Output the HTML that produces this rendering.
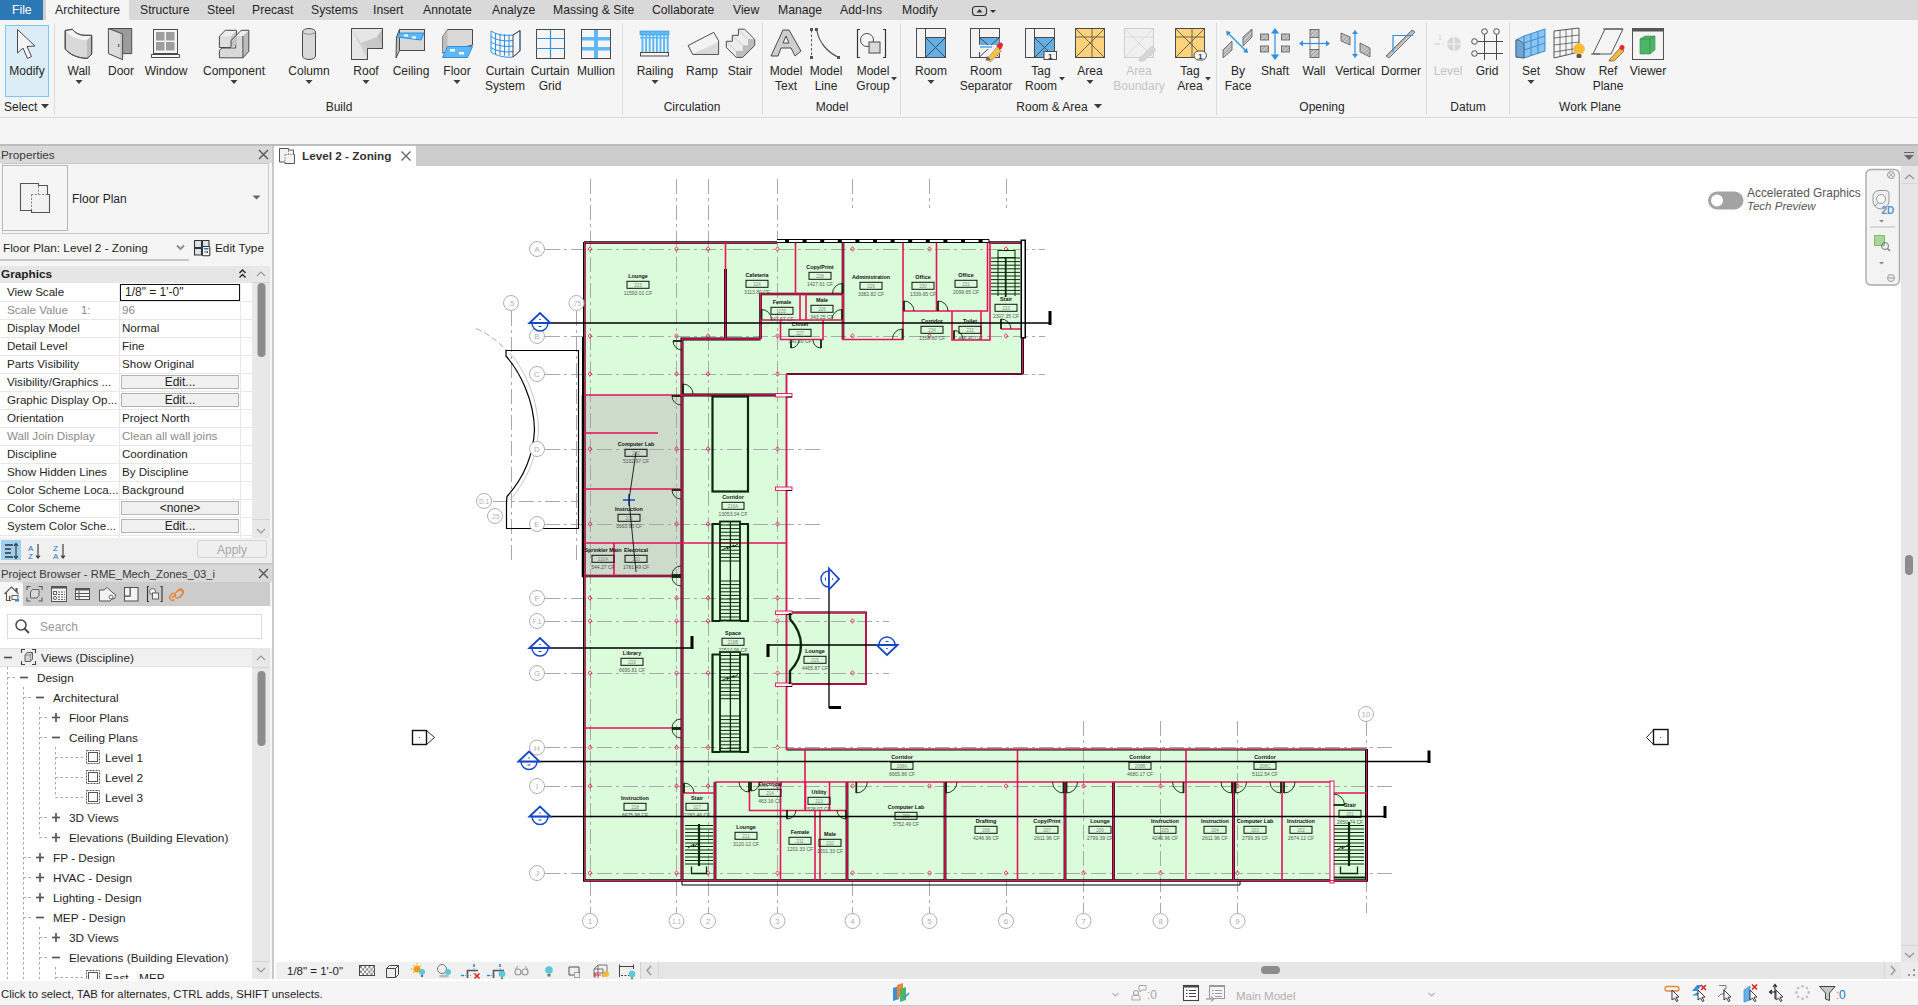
<!DOCTYPE html>
<html><head><meta charset="utf-8"><title>Revit</title><style>*{margin:0;padding:0;box-sizing:border-box}
html,body{width:1918px;height:1006px;overflow:hidden;background:#f5f5f5;font-family:"Liberation Sans",sans-serif;font-size:12px;color:#1e1e1e}
.a{position:absolute}
.t{position:absolute;white-space:nowrap;line-height:14px}
.tab{position:absolute;top:0;height:20px;line-height:20px;font-size:12.2px;color:#262626;white-space:nowrap}
.lbl{position:absolute;text-align:center;font-size:12px;line-height:15px;color:#262626;white-space:nowrap;transform:translateX(-50%)}
.plbl{position:absolute;top:100px;font-size:12px;line-height:15px;color:#262626;white-space:nowrap;transform:translateX(-50%)}
</style></head><body>
<div class="a" style="left:0;top:0;width:1918px;height:20px;background:#d9d9d9"></div>
<div class="a" style="left:0;top:0;width:43px;height:20px;background:#2b78b4"></div>
<div class="a" style="left:43px;top:0;width:3px;height:20px;background:#cfcfcf"></div>
<div class="a" style="left:46px;top:0;width:83px;height:20px;background:#f5f5f5"></div>
<div class="tab" style="left:12px;color:#fff">File</div>
<div class="tab" style="left:55px;">Architecture</div>
<div class="tab" style="left:140px;">Structure</div>
<div class="tab" style="left:207px;">Steel</div>
<div class="tab" style="left:252px;">Precast</div>
<div class="tab" style="left:311px;">Systems</div>
<div class="tab" style="left:373px;">Insert</div>
<div class="tab" style="left:423px;">Annotate</div>
<div class="tab" style="left:492px;">Analyze</div>
<div class="tab" style="left:553px;">Massing &amp; Site</div>
<div class="tab" style="left:652px;">Collaborate</div>
<div class="tab" style="left:733px;">View</div>
<div class="tab" style="left:778px;">Manage</div>
<div class="tab" style="left:840px;">Add-Ins</div>
<div class="tab" style="left:902px;">Modify</div>
<svg class="a" style="left:970px;top:4px" width="30" height="14"><rect x="2.5" y="2.5" width="14" height="9" rx="3" fill="none" stroke="#333" stroke-width="1.1"/><path d="M6.5 8.5 L9.5 5 L12.5 8.5 Z" fill="#333"/><path d="M20 6 h6 l-3 3 z" fill="#333"/></svg>
<div class="a" style="left:0;top:117px;width:1918px;height:1px;background:#dadada"></div>
<svg class="a" style="left:0;top:0" width="1918" height="118" viewBox="0 0 1918 118">
<defs><pattern id="hatch" width="3" height="3" patternUnits="userSpaceOnUse" patternTransform="rotate(45)"><rect width="3" height="3" fill="#c8c8c8"/><path d="M0 0 V3" stroke="#7a7a7a" stroke-width="1"/></pattern></defs>
<rect x="5.5" y="25.5" width="43" height="71" fill="#dcedf8" stroke="#7cc7ee"/>
<path d="M17.5 29.5 L17.5 53 L23 48 L27.5 58.5 L31.5 56.5 L27 46.5 L35 46 Z" fill="#f5f5f5" stroke="#4a4a4a" stroke-width="1"/>
<path d="M65.2 30.5 C68 30 70 30 72.3 29.2 C75 33 79 35 84 35.3 L91.7 35.3 L91.7 54 C90 56 88.5 57.5 87 58.4 C78 58 70 55 65.2 49 Z" fill="#d9d9d9" stroke="#4a4a4a" stroke-width="1"/>
<path d="M65.6 31 C67 30.6 70 30.4 72.3 29.7 C75 33.5 79 35.5 84 35.8 L91.2 35.8 L87 40.3 C78 40 70 37 65.6 31 Z" fill="#f3f3f3"/>
<path d="M87 40.3 L91.2 35.8 V54 C90 56 88.5 57.5 87 58 Z" fill="#bdbdbd"/>
<path d="M65.2 30.5 C68 30 70 30 72.3 29.2 C75 33 79 35 84 35.3 L91.7 35.3 L91.7 54 C90 56 88.5 57.5 87 58.4 C78 58 70 55 65.2 49 Z" fill="none" stroke="#4a4a4a" stroke-width="1"/>
<path d="M108.4 28.5 H131.7 V53.6 H122.6 V34 Z" fill="#9b9b9b"/>
<path d="M108.9 28.8 L122.3 34.2 V59.3 L108.9 53.4 Z" fill="#dcdcdc"/><path d="M120 33.5 L122.3 34.2 V59.3 L120 58.3 Z" fill="#c8c8c8"/>
<path d="M108.4 28.5 H131.7 V53.6 H122.6 V59.7 L108.4 53.6 Z M108.4 28.5 L122.6 34 V53.6" fill="none" stroke="#4a4a4a" stroke-width="1"/>
<rect x="118.2" y="44" width="1" height="3" fill="#444"/>
<rect x="153.5" y="29.5" width="24" height="24" fill="#f5f5f5" stroke="#4a4a4a" stroke-width="1"/>
<rect x="156" y="32" width="8.5" height="8.5" fill="#9e9e9e"/><rect x="166" y="32" width="8.5" height="8.5" fill="#9e9e9e"/>
<rect x="156" y="42" width="8.5" height="8.5" fill="#9e9e9e"/><rect x="166" y="42" width="8.5" height="8.5" fill="#9e9e9e"/>
<path d="M151.5 54.5 L179.5 54.5 L179.5 57.5 L151.5 57.5 Z" fill="#f5f5f5" stroke="#4a4a4a" stroke-width="1"/>
<path d="M219.4 50.3 L222 48 H235.7 V35.9 L241.3 30.3 H248.8 V51.5 L242.9 57.8 H219.4 Z" fill="#d9d9d9"/>
<path d="M242.9 36 L248.8 30.3 V51.5 L242.9 57.8 Z" fill="#bdbdbd"/><path d="M235.7 35.9 L241.3 30.3 H248.8 L242.9 36 Z" fill="#eeeeee"/>
<path d="M219.4 50.3 L222 48 H235.7 V35.9 L241.3 30.3 H248.8 V51.5 L242.9 57.8 H219.4 Z M242.9 36 V57.8" fill="none" stroke="#4a4a4a" stroke-width="1"/>
<path d="M219.4 36.2 L225.3 30.3 H236.6 V35 L231 40.5 V47.5 H219.4 Z" fill="#dedede"/><path d="M231 36.2 L236.6 30.8 V44 L231 49 Z" fill="#c4c4c4"/><path d="M219.9 36.2 L225.3 30.8 H236.3 L231 36.2 Z" fill="#eeeeee"/>
<path d="M219.4 36.2 L225.3 30.3 H236.6 V35 L231 40.5 V47.5 H219.4 Z" fill="none" stroke="#4a4a4a" stroke-width="1"/>
<rect x="302.5" y="28.5" width="13" height="31" rx="6.5" ry="3.5" fill="#d9d9d9" stroke="#4a4a4a" stroke-width="1"/>
<path d="M302.5 32 C304 35 314 35 315.5 32" fill="none" stroke="#8a8a8a"/>
<path d="M351.5 28.5 L382.5 28.5 L382.5 48.5 L367.5 48.5 L367.5 59.5 L351.5 59.5 Z" fill="#e6e6e6" stroke="#4a4a4a" stroke-width="1"/>
<path d="M351.5 28.5 L361 43 L367.5 48.5 L367.5 59.5 Z" fill="#d0d0d0"/><path d="M382.5 28.5 L377 37 L382.5 48.5 Z" fill="#bdbdbd"/><path d="M361 43 L377 37 L382.5 48.5 L367.5 48.5 Z" fill="#c8c8c8"/>
<path d="M351.5 28.5 L382.5 28.5 L382.5 48.5 L367.5 48.5 L367.5 59.5 L351.5 59.5 Z" fill="none" stroke="#4a4a4a" stroke-width="1"/>
<rect x="399.5" y="29.5" width="25" height="21" fill="#d9d9d9" stroke="#4a4a4a" stroke-width="1"/>
<path d="M396.5 37 L399.5 29.5 L399.5 50.5 L396 58 Z" fill="#bdbdbd" stroke="#4a4a4a" stroke-width="1"/>
<path d="M396.5 37 L400 33 L424 33 L421 40 Z" fill="#5eb8f5" stroke="#2d8fe0"/>
<rect x="404" y="34.5" width="4" height="2" fill="#fff"/><rect x="412" y="36.5" width="4" height="2" fill="#fff"/>
<path d="M442.5 37 L447.5 29.5 L472.5 29.5 L472.5 45 L442.5 53 Z" fill="#d9d9d9" stroke="#4a4a4a" stroke-width="1"/>
<path d="M442.5 37 L447.5 29.5 L447.5 47 L442.5 53 Z" fill="#bdbdbd"/>
<path d="M442.5 57.5 L447.5 46.5 L472.5 46.5 L467.5 57.5 Z" fill="#5eb8f5" stroke="#2d8fe0"/>
<rect x="450" y="49" width="5" height="2.5" fill="#fff"/><rect x="459" y="52" width="5" height="2.5" fill="#fff"/>
<path d="M491 31 C497 35 505 36 513 35 L520 30.5 L520 51 L513 57 C505 58 497 56 491 52 Z" fill="#f5f5f5" stroke="#2d8fe0"/>
<path d="M495.5 33.4 L495.5 54.5" stroke="#2d8fe0"/>
<path d="M500.0 33.8 L500.0 55.0" stroke="#2d8fe0"/>
<path d="M504.5 34.2 L504.5 55.5" stroke="#2d8fe0"/>
<path d="M509.0 34.6 L509.0 56.0" stroke="#2d8fe0"/>
<path d="M491 36.5 C497 40.5 505 41.5 513 40.5" fill="none" stroke="#2d8fe0"/>
<path d="M491 42.0 C497 46.0 505 47.0 513 46.0" fill="none" stroke="#2d8fe0"/>
<path d="M491 47.5 C497 51.5 505 52.5 513 51.5" fill="none" stroke="#2d8fe0"/>
<path d="M513 35 L520 30.5 L520 51 L513 57 Z" fill="none" stroke="#4a4a4a" stroke-width="1"/>
<rect x="536.5" y="29.5" width="28" height="29" fill="#f5f5f5" stroke="#4a4a4a" stroke-width="1"/>
<path d="M550.5 29.5 V58.5 M536.5 38.5 H564.5 M536.5 48.5 H564.5" stroke="#2d8fe0" stroke-width="1.2"/>
<rect x="581.5" y="29.5" width="29" height="29" fill="#f5f5f5" stroke="#4a4a4a" stroke-width="1"/>
<rect x="594" y="29.5" width="4" height="29" fill="#5eb8f5"/><rect x="581.5" y="37" width="29" height="3.5" fill="#5eb8f5"/><rect x="581.5" y="47" width="29" height="3.5" fill="#5eb8f5"/>
<rect x="581.5" y="29.5" width="29" height="29" fill="none" stroke="#4a4a4a" stroke-width="1"/>
<rect x="640" y="31" width="29" height="4" fill="#5eb8f5" stroke="#2d8fe0" stroke-width="0.6"/>
<rect x="641.5" y="35" width="2" height="17" fill="#5eb8f5"/>
<rect x="645.1" y="35" width="2" height="17" fill="#5eb8f5"/>
<rect x="648.7" y="35" width="2" height="17" fill="#5eb8f5"/>
<rect x="652.3" y="35" width="2" height="17" fill="#5eb8f5"/>
<rect x="655.9" y="35" width="2" height="17" fill="#5eb8f5"/>
<rect x="659.5" y="35" width="2" height="17" fill="#5eb8f5"/>
<rect x="663.1" y="35" width="2" height="17" fill="#5eb8f5"/>
<rect x="666.7" y="35" width="2" height="17" fill="#5eb8f5"/>
<rect x="640" y="37" width="29" height="1.5" fill="#5eb8f5"/>
<rect x="640.5" y="52.5" width="28" height="3.5" fill="#f5f5f5" stroke="#4a4a4a" stroke-width="1"/>
<path d="M688.1 45.5 L713.8 32.3 L718.6 40.7 V54.4 H692.7 Z" fill="#f3f3f3"/>
<path d="M693.8 53.5 L718 41.9 V53.5 Z" fill="#dadada"/>
<path d="M688.1 45.5 L713.8 32.3 L718.6 40.7 V54.4 H692.7 Z" fill="none" stroke="#4a4a4a" stroke-width="1"/>
<path d="M726.3 41.3 H732.3 V35.3 H738.4 V29.2 H744.6 L754.7 39.4 V45.5 L742.6 57.4 H736.3 L726.3 47.4 Z" fill="#eeeeee"/>
<path d="M735.9 51.1 H742.6 V45.3 H748 V39 H754.2 V45.5 L742.6 57 H736.3 Z" fill="#bdbdbd"/>
<path d="M726.8 41.8 L735.9 51.1 M732.3 35.8 L742.6 45.3 M738.4 29.7 L748 39" stroke="#dadada" stroke-width="1.5"/>
<path d="M726.3 41.3 H732.3 V35.3 H738.4 V29.2 H744.6 L754.7 39.4 V45.5 L742.6 57.4 H736.3 L726.3 47.4 Z" fill="none" stroke="#4a4a4a" stroke-width="1"/>
<path d="M771 56 L783 30 L789 30 L801 51 L795 56 L791 48 L781 48 L778 56 Z" fill="#cfcfcf" stroke="#4a4a4a" stroke-width="1"/>
<path d="M783 43 L786 36 L789 43 Z" fill="#f5f5f5" stroke="#4a4a4a" stroke-width="1"/>
<path d="M811.5 30 V57" stroke="#555" stroke-dasharray="2.5 2"/>
<rect x="810" y="28" width="3" height="3" fill="#555"/><rect x="810" y="56" width="3" height="3" fill="#555"/><rect x="815" y="28" width="3" height="3" fill="#555"/><rect x="837" y="56" width="3" height="3" fill="#555"/>
<path d="M817 31 C819 42 827 52 838 57" fill="none" stroke="#555" stroke-width="1.2"/>
<path d="M860 29.5 H857.5 V57.5 H860 M883 29.5 H885.5 V57.5 H883" fill="none" stroke="#333" stroke-width="1.2"/>
<circle cx="867" cy="40" r="6.5" fill="#f5f5f5" stroke="#4a4a4a" stroke-width="1"/>
<rect x="869" y="42" width="11" height="11" fill="#d9d9d9" stroke="#4a4a4a" stroke-width="1"/>
<rect x="916.5" y="28.5" width="29" height="29" fill="#f3f3f3" stroke="#4a4a4a" stroke-width="1"/>
<rect x="925.5" y="37.5" width="20" height="20" fill="#63b0e6" stroke="#4a4a4a" stroke-width="1"/>
<path d="M925.5 28.5 V44.5 M925.5 53 V57.5 M925.5 37.5 L945.5 57.5 M945.5 37.5 L925.5 57.5" stroke="#4a4a4a" stroke-width="1"/>
<rect x="970.5" y="28.5" width="29" height="29" fill="#f3f3f3" stroke="#4a4a4a" stroke-width="1"/>
<path d="M979.5 37.5 H999.5 V45 H979.5 Z" fill="#63b0e6"/>
<path d="M979.5 28.5 V44.5 M979.5 52 V57.5 M979.5 37.5 H999.5 M979.5 37.5 L988 45 M999.5 37.5 L991 45 M980 56.5 L988 49 M997 55 L998.5 56.5" fill="none" stroke="#4a4a4a" stroke-width="1"/>
<path d="M980 47 H992" stroke="#2d8fe0" stroke-width="1.2"/>
<path d="M986.5 59.5 L997 47 L1001.5 51 L990.5 62 Z" fill="#f4c04a" stroke="#777" stroke-width="0.5"/><path d="M985.5 60.5 L987 56 L991 60 Z" fill="#666"/><path d="M996 46 L999 43 a2.5 2.5 0 0 1 3.5 3.5 L1001 49.5 Z" fill="#e8282a"/>
<rect x="1025.5" y="28.5" width="29" height="29" fill="#f3f3f3" stroke="#4a4a4a" stroke-width="1"/>
<rect x="1034.5" y="37.5" width="20" height="20" fill="#63b0e6" stroke="#4a4a4a" stroke-width="1"/>
<path d="M1034.5 28.5 V44.5 M1034.5 53 V57.5 M1034.5 37.5 L1054.5 57.5 M1054.5 37.5 L1034.5 57.5" stroke="#4a4a4a" stroke-width="1"/>
<rect x="1044" y="51.5" width="12.5" height="8" fill="#f5f5f5" stroke="#4a4a4a" stroke-width="1"/><text x="1050.3" y="58.5" font-size="8" font-weight="bold" text-anchor="middle" fill="#333" font-family="Liberation Sans">1</text>
<rect x="1075.5" y="28.5" width="29" height="29" fill="#fcd27b" stroke="#4a4a4a" stroke-width="1"/>
<path d="M1075.5 28.5 L1104.5 57.5 M1104.5 28.5 L1075.5 57.5 M1075.5 37 H1104.5 M1092 28.5 V57.5" stroke="#4a4a4a" stroke-width="0.8"/>
<rect x="1124.5" y="28.5" width="29" height="29" fill="#f0f0f0" stroke="#cfcfcf"/>
<path d="M1124.5 28.5 L1153.5 57.5 M1153.5 28.5 L1124.5 57.5 M1124.5 37 H1153.5" stroke="#d6d6d6" stroke-width="0.8"/>
<path d="M1140 58 L1152 46 L1156 50 L1144 61 L1139 61 Z" fill="#d6d6d6" stroke="#c8c8c8" stroke-width="0.7"/>
<rect x="1175.5" y="28.5" width="29" height="29" fill="#fcd27b" stroke="#4a4a4a" stroke-width="1"/>
<path d="M1175.5 28.5 L1204.5 57.5 M1204.5 28.5 L1175.5 57.5 M1175.5 37 H1204.5 M1192 28.5 V57.5" stroke="#4a4a4a" stroke-width="0.8"/>
<rect x="1194" y="51" width="12.5" height="9" rx="4.5" fill="#f5f5f5" stroke="#4a4a4a" stroke-width="1"/><text x="1200.3" y="58.5" font-size="7.5" text-anchor="middle" fill="#333" font-weight="bold">1</text>
<path d="M1223 50 L1232 41 L1232 50 L1223 58 Z" fill="url(#hatch)" stroke="#555" stroke-width="0.8"/>
<path d="M1243 37 L1252 29 L1252 37 L1243 46 Z" fill="url(#hatch)" stroke="#555" stroke-width="0.8"/>
<path d="M1228 33 L1246 51" stroke="#2d8fe0" stroke-width="1.2"/><path d="M1226 31 L1231 32 L1227 36 Z M1248 53 L1243 52 L1247 48 Z" fill="#2d8fe0"/>
<rect x="1260.5" y="34.0" width="8" height="6" fill="url(#hatch)" stroke="#555" stroke-width="0.8"/>
<rect x="1281.5" y="34.0" width="8" height="6" fill="url(#hatch)" stroke="#555" stroke-width="0.8"/>
<rect x="1260.5" y="46.0" width="8" height="6" fill="url(#hatch)" stroke="#555" stroke-width="0.8"/>
<rect x="1281.5" y="46.0" width="8" height="6" fill="url(#hatch)" stroke="#555" stroke-width="0.8"/>
<path d="M1275 31 V57 M1272 33 L1275 29 L1278 33 Z M1272 55 L1275 59 L1278 55 Z" stroke="#2d8fe0" fill="#2d8fe0" stroke-width="1.2"/>
<rect x="1310" y="29.5" width="9" height="8" fill="url(#hatch)" stroke="#555" stroke-width="0.8"/><rect x="1310" y="49.5" width="9" height="8" fill="url(#hatch)" stroke="#555" stroke-width="0.8"/>
<path d="M1310 37.5 V49.5 M1319 37.5 V49.5" stroke="#555" stroke-width="0.8"/>
<path d="M1301 43.5 H1328" stroke="#2d8fe0" stroke-width="1.2"/><path d="M1303 40.5 L1299 43.5 L1303 46.5 Z M1326 40.5 L1330 43.5 L1326 46.5 Z" fill="#2d8fe0"/>
<path d="M1341 33 L1350 37 L1350 45 L1341 41 Z" fill="url(#hatch)" stroke="#555" stroke-width="0.8"/><path d="M1360 43 L1370 48 L1370 57 L1360 52 Z" fill="url(#hatch)" stroke="#555" stroke-width="0.8"/>
<path d="M1355 32 V56" stroke="#2d8fe0" stroke-width="1.2"/><path d="M1352 34 L1355 30 L1358 34 Z M1352 54 L1355 58 L1358 54 Z" fill="#2d8fe0"/>
<path d="M1386 56 L1412 30 L1415 32 L1389 58 Z" fill="url(#hatch)" stroke="#555" stroke-width="0.8"/>
<path d="M1393 52 V35.5 H1413" fill="none" stroke="#2d8fe0" stroke-width="1.2"/>
<path d="M1434 44 H1440 M1442 44 H1444" stroke="#cfcfcf"/><text x="1438" y="40" font-size="7" fill="#cfcfcf">1</text>
<circle cx="1454" cy="44" r="7" fill="#d6d6d6"/><path d="M1447 44 H1461 M1454 37 V51" stroke="#f5f5f5" stroke-width="1.2"/>
<circle cx="1484.5" cy="31.5" r="2.8" fill="none" stroke="#4a4a4a" stroke-width="1"/><circle cx="1496.5" cy="31.5" r="2.8" fill="none" stroke="#4a4a4a" stroke-width="1"/>
<circle cx="1474.5" cy="41.5" r="2.8" fill="none" stroke="#4a4a4a" stroke-width="1"/><circle cx="1474.5" cy="53.5" r="2.8" fill="none" stroke="#4a4a4a" stroke-width="1"/>
<path d="M1484.5 34.5 V60 M1496.5 34.5 V60 M1477.5 41.5 H1503 M1477.5 53.5 H1503" stroke="#4a4a4a" stroke-width="1"/>
<path d="M1516 40 L1524 36 L1545 29 L1545 51 L1524 58 L1516 57 Z" fill="#8fc3ea" stroke="#2d8fe0"/>
<path d="M1524 36 L1524 58 M1531 34 L1531 56 M1538 31.5 L1538 53.5 M1524 43 L1545 36 M1524 50 L1545 43" stroke="#2d8fe0"/>
<path d="M1516 40 L1516 57 L1524 58 L1524 44 L1519 40 Z" fill="#6aa7d8" stroke="#555" stroke-width="0.8"/>
<path d="M1554 31 L1579 28 L1579 52 L1554 58 Z" fill="#f5f5f5" stroke="#555"/>
<path d="M1560 30.3 V56.6 M1566 29.6 V55.2 M1572 28.9 V53.8 M1554 38 L1579 35 M1554 45 L1579 42 M1554 52 L1579 48" stroke="#555" stroke-width="0.8"/>
<circle cx="1579" cy="49" r="5.8" fill="#f9b93a"/><rect x="1576.5" y="54" width="5" height="4" rx="1.5" fill="#555"/>
<path d="M1593 54 L1605 29 L1623 29 L1611 54 Z" fill="none" stroke="#555"/>
<path d="M1591 54 H1600 M1603 29 H1623" stroke="#555"/>
<path d="M1610 59 L1620 48 L1624 51 L1614 61 L1609 61 Z" fill="#f4b73f" stroke="#555" stroke-width="0.7"/><circle cx="1622" cy="47.5" r="2.5" fill="#e23"/>
<rect x="1632.5" y="28.5" width="31" height="31" fill="#f5f5f5" stroke="#555"/><rect x="1632.5" y="28.5" width="31" height="3" fill="#555"/>
<path d="M1640 39 L1645 36 L1655 36 L1655 50 L1650 54 L1640 54 Z" fill="#4cb567" stroke="#3a8f4f" stroke-width="0.6"/><path d="M1640 39 L1650 39 L1655 36 M1650 39 V54" fill="none" stroke="#2f7f43" stroke-width="0.6"/>
<rect x="54" y="23" width="1" height="92" fill="#dcdcdc"/>
<rect x="622" y="23" width="1" height="92" fill="#dcdcdc"/>
<rect x="762" y="23" width="1" height="92" fill="#dcdcdc"/>
<rect x="900" y="23" width="1" height="92" fill="#dcdcdc"/>
<rect x="1216" y="23" width="1" height="92" fill="#dcdcdc"/>
<rect x="1426" y="23" width="1" height="92" fill="#dcdcdc"/>
<rect x="1509" y="23" width="1" height="92" fill="#dcdcdc"/>
<path d="M75.5 80 h7 l-3.5 4 z" fill="#3c3c3c"/>
<path d="M230.5 80 h7 l-3.5 4 z" fill="#3c3c3c"/>
<path d="M305.5 80 h7 l-3.5 4 z" fill="#3c3c3c"/>
<path d="M362.5 80 h7 l-3.5 4 z" fill="#3c3c3c"/>
<path d="M453.5 80 h7 l-3.5 4 z" fill="#3c3c3c"/>
<path d="M651.5 80 h7 l-3.5 4 z" fill="#3c3c3c"/>
<path d="M927.5 80 h7 l-3.5 4 z" fill="#3c3c3c"/>
<path d="M1086.5 80 h7 l-3.5 4 z" fill="#3c3c3c"/>
<path d="M1527.5 80 h7 l-3.5 4 z" fill="#3c3c3c"/>
<path d="M891.0 77 h6 l-3 3.5 z" fill="#3c3c3c"/>
<path d="M1059.0 77 h6 l-3 3.5 z" fill="#3c3c3c"/>
<path d="M1205.0 77 h6 l-3 3.5 z" fill="#3c3c3c"/>
<path d="M41 104 h8 l-4 4.5 z" fill="#3c3c3c"/>
<path d="M1094 104 h8 l-4 4.5 z" fill="#3c3c3c"/>
</svg>
<div class="lbl" style="left:27px;top:63.8px;color:#262626">Modify</div>
<div class="lbl" style="left:79px;top:63.8px;color:#262626">Wall</div>
<div class="lbl" style="left:121px;top:63.8px;color:#262626">Door</div>
<div class="lbl" style="left:166px;top:63.8px;color:#262626">Window</div>
<div class="lbl" style="left:234px;top:63.8px;color:#262626">Component</div>
<div class="lbl" style="left:309px;top:63.8px;color:#262626">Column</div>
<div class="lbl" style="left:366px;top:63.8px;color:#262626">Roof</div>
<div class="lbl" style="left:411px;top:63.8px;color:#262626">Ceiling</div>
<div class="lbl" style="left:457px;top:63.8px;color:#262626">Floor</div>
<div class="lbl" style="left:505px;top:63.8px;color:#262626">Curtain</div>
<div class="lbl" style="left:505px;top:78.8px;color:#262626">System</div>
<div class="lbl" style="left:550px;top:63.8px;color:#262626">Curtain</div>
<div class="lbl" style="left:550px;top:78.8px;color:#262626">Grid</div>
<div class="lbl" style="left:596px;top:63.8px;color:#262626">Mullion</div>
<div class="lbl" style="left:655px;top:63.8px;color:#262626">Railing</div>
<div class="lbl" style="left:702px;top:63.8px;color:#262626">Ramp</div>
<div class="lbl" style="left:740px;top:63.8px;color:#262626">Stair</div>
<div class="lbl" style="left:786px;top:63.8px;color:#262626">Model</div>
<div class="lbl" style="left:786px;top:78.8px;color:#262626">Text</div>
<div class="lbl" style="left:826px;top:63.8px;color:#262626">Model</div>
<div class="lbl" style="left:826px;top:78.8px;color:#262626">Line</div>
<div class="lbl" style="left:873px;top:63.8px;color:#262626">Model</div>
<div class="lbl" style="left:873px;top:78.8px;color:#262626">Group</div>
<div class="lbl" style="left:931px;top:63.8px;color:#262626">Room</div>
<div class="lbl" style="left:986px;top:63.8px;color:#262626">Room</div>
<div class="lbl" style="left:986px;top:78.8px;color:#262626">Separator</div>
<div class="lbl" style="left:1041px;top:63.8px;color:#262626">Tag</div>
<div class="lbl" style="left:1041px;top:78.8px;color:#262626">Room</div>
<div class="lbl" style="left:1090px;top:63.8px;color:#262626">Area</div>
<div class="lbl" style="left:1139px;top:63.8px;color:#c4c4c4">Area</div>
<div class="lbl" style="left:1139px;top:78.8px;color:#c4c4c4">Boundary</div>
<div class="lbl" style="left:1190px;top:63.8px;color:#262626">Tag</div>
<div class="lbl" style="left:1190px;top:78.8px;color:#262626">Area</div>
<div class="lbl" style="left:1238px;top:63.8px;color:#262626">By</div>
<div class="lbl" style="left:1238px;top:78.8px;color:#262626">Face</div>
<div class="lbl" style="left:1275px;top:63.8px;color:#262626">Shaft</div>
<div class="lbl" style="left:1314px;top:63.8px;color:#262626">Wall</div>
<div class="lbl" style="left:1355px;top:63.8px;color:#262626">Vertical</div>
<div class="lbl" style="left:1401px;top:63.8px;color:#262626">Dormer</div>
<div class="lbl" style="left:1448px;top:63.8px;color:#c4c4c4">Level</div>
<div class="lbl" style="left:1487px;top:63.8px;color:#262626">Grid</div>
<div class="lbl" style="left:1531px;top:63.8px;color:#262626">Set</div>
<div class="lbl" style="left:1570px;top:63.8px;color:#262626">Show</div>
<div class="lbl" style="left:1608px;top:63.8px;color:#262626">Ref</div>
<div class="lbl" style="left:1608px;top:78.8px;color:#262626">Plane</div>
<div class="lbl" style="left:1648px;top:63.8px;color:#262626">Viewer</div>
<div class="t" style="left:4px;top:100px;line-height:15px">Select</div>
<div class="plbl" style="left:339px">Build</div>
<div class="plbl" style="left:692px">Circulation</div>
<div class="plbl" style="left:832px">Model</div>
<div class="plbl" style="left:1052px">Room &amp; Area</div>
<div class="plbl" style="left:1322px">Opening</div>
<div class="plbl" style="left:1468px">Datum</div>
<div class="plbl" style="left:1590px">Work Plane</div>
<div class="a" style="left:0;top:144px;width:1918px;height:2px;background:#bdbdbd"></div>
<div class="a" style="left:274px;top:146px;width:1644px;height:20px;background:#cccccc"></div>
<div class="a" style="left:274px;top:146px;width:142px;height:20px;background:#ffffff"></div>
<svg class="a" style="left:276px;top:146px" width="22" height="20"><path d="M3.5 2.5 H12.5 V4 H17.5 V8.5 H18.5 V17.5 H9 V16 H3.5 Z" fill="#f2f2f2" stroke="#555" stroke-width="1"/><path d="M12.5 4.5 V8.5 M9 8.5 V15.5 M9 8.5 H17.5" stroke="#777" stroke-width="0.8" stroke-dasharray="1.5 1" fill="none"/></svg>
<div class="t" style="left:302px;top:149px;font-weight:bold;font-size:11.75px;color:#333">Level 2 - Zoning</div>
<svg class="a" style="left:400px;top:150px" width="12" height="12"><path d="M1.5 1.5 L10.5 10.5 M10.5 1.5 L1.5 10.5" stroke="#666" stroke-width="1.4"/></svg>
<svg class="a" style="left:1902px;top:150px" width="14" height="12"><path d="M2 2.5 H12" stroke="#666"/><path d="M2 5 H12 L7 10 Z" fill="#666"/></svg>
<div class="a" style="left:276px;top:166px;width:1625px;height:796px;background:#ffffff"></div>
<div class="a" style="left:274px;top:166px;width:2px;height:815px;background:#ffffff"></div>
<svg class="a" style="left:276px;top:166px" width="1625" height="796" viewBox="276 166 1625 796">
<path d="M584 242 H1022 V374 H786 V749 H1366 V881 H584 Z" fill="#dafcda"/>
<rect x="786" y="612" width="80" height="72" fill="#dafcda"/>
<rect x="585" y="395" width="96" height="181" fill="#cddbca"/>
<g stroke="#a8a8a8" stroke-width="1" fill="none" stroke-dasharray="15 4 3 4"><path d="M590.5 179.0 L590.5 913.0"/><path d="M676.5 179.0 L676.5 913.0"/><path d="M708.5 179.0 L708.5 913.0"/><path d="M777.5 179.0 L777.5 913.0"/><path d="M852.5 179.0 L852.5 208.0"/><path d="M852.5 881.0 L852.5 913.0"/><path d="M929.5 179.0 L929.5 208.0"/><path d="M929.5 881.0 L929.5 913.0"/><path d="M1006.5 179.0 L1006.5 208.0"/><path d="M1006.5 881.0 L1006.5 913.0"/><path d="M1083.5 721.0 L1083.5 913.0"/><path d="M1160.5 721.0 L1160.5 913.0"/><path d="M1237.5 721.0 L1237.5 913.0"/><path d="M1366.5 721.0 L1366.5 913.0"/><path d="M511.5 311.0 L511.5 560.0"/><path d="M576.5 311.0 L576.5 560.0"/><path d="M545.0 249.5 L1045.0 249.5"/><path d="M545.0 336.5 L1045.0 336.5"/><path d="M545.0 374.5 L1045.0 374.5"/><path d="M545.0 449.5 L821.0 449.5"/><path d="M545.0 524.5 L821.0 524.5"/><path d="M545.0 598.5 L821.0 598.5"/><path d="M545.0 621.5 L889.0 621.5"/><path d="M545.0 673.5 L889.0 673.5"/><path d="M545.0 747.5 L1394.0 747.5"/><path d="M545.0 786.5 L1394.0 786.5"/><path d="M545.0 873.5 L1394.0 873.5"/><path d="M493.0 501.5 L578.0 501.5"/></g>
<g fill="none" stroke="#e8115b" stroke-width="0.8"><path d="M590.0 246.7 l1.9 2.3 l-1.9 2.3 l-1.9 -2.3 z"/><path d="M676.5 246.7 l1.9 2.3 l-1.9 2.3 l-1.9 -2.3 z"/><path d="M708.0 246.7 l1.9 2.3 l-1.9 2.3 l-1.9 -2.3 z"/><path d="M777.5 246.7 l1.9 2.3 l-1.9 2.3 l-1.9 -2.3 z"/><path d="M590.0 333.7 l1.9 2.3 l-1.9 2.3 l-1.9 -2.3 z"/><path d="M676.5 333.7 l1.9 2.3 l-1.9 2.3 l-1.9 -2.3 z"/><path d="M708.0 333.7 l1.9 2.3 l-1.9 2.3 l-1.9 -2.3 z"/><path d="M777.5 333.7 l1.9 2.3 l-1.9 2.3 l-1.9 -2.3 z"/><path d="M590.0 371.7 l1.9 2.3 l-1.9 2.3 l-1.9 -2.3 z"/><path d="M676.5 371.7 l1.9 2.3 l-1.9 2.3 l-1.9 -2.3 z"/><path d="M708.0 371.7 l1.9 2.3 l-1.9 2.3 l-1.9 -2.3 z"/><path d="M777.5 371.7 l1.9 2.3 l-1.9 2.3 l-1.9 -2.3 z"/><path d="M590.0 446.7 l1.9 2.3 l-1.9 2.3 l-1.9 -2.3 z"/><path d="M676.5 446.7 l1.9 2.3 l-1.9 2.3 l-1.9 -2.3 z"/><path d="M708.0 446.7 l1.9 2.3 l-1.9 2.3 l-1.9 -2.3 z"/><path d="M777.5 446.7 l1.9 2.3 l-1.9 2.3 l-1.9 -2.3 z"/><path d="M590.0 521.7 l1.9 2.3 l-1.9 2.3 l-1.9 -2.3 z"/><path d="M676.5 521.7 l1.9 2.3 l-1.9 2.3 l-1.9 -2.3 z"/><path d="M708.0 521.7 l1.9 2.3 l-1.9 2.3 l-1.9 -2.3 z"/><path d="M777.5 521.7 l1.9 2.3 l-1.9 2.3 l-1.9 -2.3 z"/><path d="M590.0 595.7 l1.9 2.3 l-1.9 2.3 l-1.9 -2.3 z"/><path d="M676.5 595.7 l1.9 2.3 l-1.9 2.3 l-1.9 -2.3 z"/><path d="M708.0 595.7 l1.9 2.3 l-1.9 2.3 l-1.9 -2.3 z"/><path d="M777.5 595.7 l1.9 2.3 l-1.9 2.3 l-1.9 -2.3 z"/><path d="M590.0 618.7 l1.9 2.3 l-1.9 2.3 l-1.9 -2.3 z"/><path d="M676.5 618.7 l1.9 2.3 l-1.9 2.3 l-1.9 -2.3 z"/><path d="M708.0 618.7 l1.9 2.3 l-1.9 2.3 l-1.9 -2.3 z"/><path d="M777.5 618.7 l1.9 2.3 l-1.9 2.3 l-1.9 -2.3 z"/><path d="M590.0 670.7 l1.9 2.3 l-1.9 2.3 l-1.9 -2.3 z"/><path d="M676.5 670.7 l1.9 2.3 l-1.9 2.3 l-1.9 -2.3 z"/><path d="M708.0 670.7 l1.9 2.3 l-1.9 2.3 l-1.9 -2.3 z"/><path d="M777.5 670.7 l1.9 2.3 l-1.9 2.3 l-1.9 -2.3 z"/><path d="M590.0 745.2 l1.9 2.3 l-1.9 2.3 l-1.9 -2.3 z"/><path d="M676.5 745.2 l1.9 2.3 l-1.9 2.3 l-1.9 -2.3 z"/><path d="M708.0 745.2 l1.9 2.3 l-1.9 2.3 l-1.9 -2.3 z"/><path d="M777.5 745.2 l1.9 2.3 l-1.9 2.3 l-1.9 -2.3 z"/><path d="M590.0 783.7 l1.9 2.3 l-1.9 2.3 l-1.9 -2.3 z"/><path d="M676.5 783.7 l1.9 2.3 l-1.9 2.3 l-1.9 -2.3 z"/><path d="M708.0 783.7 l1.9 2.3 l-1.9 2.3 l-1.9 -2.3 z"/><path d="M777.5 783.7 l1.9 2.3 l-1.9 2.3 l-1.9 -2.3 z"/><path d="M590.0 870.7 l1.9 2.3 l-1.9 2.3 l-1.9 -2.3 z"/><path d="M676.5 870.7 l1.9 2.3 l-1.9 2.3 l-1.9 -2.3 z"/><path d="M708.0 870.7 l1.9 2.3 l-1.9 2.3 l-1.9 -2.3 z"/><path d="M777.5 870.7 l1.9 2.3 l-1.9 2.3 l-1.9 -2.3 z"/><path d="M852.5 246.7 l1.9 2.3 l-1.9 2.3 l-1.9 -2.3 z"/><path d="M929.5 246.7 l1.9 2.3 l-1.9 2.3 l-1.9 -2.3 z"/><path d="M1006.0 246.7 l1.9 2.3 l-1.9 2.3 l-1.9 -2.3 z"/><path d="M852.5 333.7 l1.9 2.3 l-1.9 2.3 l-1.9 -2.3 z"/><path d="M929.5 333.7 l1.9 2.3 l-1.9 2.3 l-1.9 -2.3 z"/><path d="M1006.0 333.7 l1.9 2.3 l-1.9 2.3 l-1.9 -2.3 z"/><path d="M852.5 783.7 l1.9 2.3 l-1.9 2.3 l-1.9 -2.3 z"/><path d="M929.5 783.7 l1.9 2.3 l-1.9 2.3 l-1.9 -2.3 z"/><path d="M1006.0 783.7 l1.9 2.3 l-1.9 2.3 l-1.9 -2.3 z"/><path d="M1083.5 783.7 l1.9 2.3 l-1.9 2.3 l-1.9 -2.3 z"/><path d="M1160.5 783.7 l1.9 2.3 l-1.9 2.3 l-1.9 -2.3 z"/><path d="M1237.5 783.7 l1.9 2.3 l-1.9 2.3 l-1.9 -2.3 z"/><path d="M852.5 870.7 l1.9 2.3 l-1.9 2.3 l-1.9 -2.3 z"/><path d="M929.5 870.7 l1.9 2.3 l-1.9 2.3 l-1.9 -2.3 z"/><path d="M1006.0 870.7 l1.9 2.3 l-1.9 2.3 l-1.9 -2.3 z"/><path d="M1083.5 870.7 l1.9 2.3 l-1.9 2.3 l-1.9 -2.3 z"/><path d="M1160.5 870.7 l1.9 2.3 l-1.9 2.3 l-1.9 -2.3 z"/><path d="M1237.5 870.7 l1.9 2.3 l-1.9 2.3 l-1.9 -2.3 z"/><path d="M852.5 618.7 l1.9 2.3 l-1.9 2.3 l-1.9 -2.3 z"/><path d="M852.5 670.7 l1.9 2.3 l-1.9 2.3 l-1.9 -2.3 z"/></g>
<g stroke="#000" fill="none"><path d="M584 242.5 H777 M989 242.5 H1022 M1022.5 338 V374 M1366.5 749.5 V880.5 H584.3 V242" stroke-width="2.6"/><path d="M1022.5 374 H786.5 M786.5 749.5 H1366.5" stroke-width="1.8"/><path d="M786.5 374 V749.5" stroke-width="1.3"/><path d="M725.5 269 V339 H682 V881 M725.5 339 H760.5" stroke-width="3"/><path d="M682 395 H786" stroke-width="3"/><path d="M583 395 V576 H681" stroke-width="2.5"/><path d="M843 243 V339.5 M760.5 339 V294 H843" stroke-width="2.6"/><path d="M786 612.5 H866 V684 H786" stroke-width="1.8"/><path d="M715 782 V881 M847 782 V881 M1065 782 V881 M1113.5 782 V881 M945 782 V881 M1233.5 782 V881" stroke-width="2.8"/><path d="M682 881 V885 H1240 V881" stroke-width="1"/><path d="M1366.5 749 V881" stroke-width="2.5"/><path d="M1022.5 338 V374" stroke-width="2"/></g>
<g stroke="#e8115b" stroke-width="1.6" fill="none"><path d="M725.5 243 V339 H682 M725.5 339 H760.5"/><path d="M760.5 339 V294 H843 V320 H760.5 M780.5 320 V339.5 H823 V320"/><path d="M795.5 243 V294 M843 243 V339.5 H903 V243 M903 311 H987.5 V243 M936.5 243 V311"/><path d="M952 311 V340 H990 V243 M981 311 V340 M1001 329 H1021"/><path d="M800 294 V320 M806 294 V320"/><path d="M585 395 H786 M585 433 H658 M585 489 H681 M585 543 H786 M614 543 V576 M585 576 H681"/><path d="M682 339 V881 M786.5 374 V749"/><path d="M585 728 H681"/><path d="M786 612.5 H866 V684 H786"/><path d="M805 749 V810 M715 782 H847 V881 M715 782 V881 M682 793 H715 M749.5 782 V810.5 H847 M780.5 782 V881"/><path d="M805.5 782 V810 M829.5 782 V810 M815 810 V881 M820 810 V881"/><path d="M847 782 H1331.5 V881 M945 782 V881 M1017.5 749 V881 M1065 782 V881 M1113.5 782 V881 M1186 749 V881 M1233.5 782 V881 M1282 782 V881"/><path d="M1331.5 793 H1366"/></g>
<rect x="1330" y="781" width="4" height="102" fill="#fff" stroke="#e8115b" stroke-width="1"/>
<path d="M584.5 242.5 H777 M989 242.5 H1022 M1022.5 338 V374 H786.5 V749.5 H1366.5 V880.5 H584.5 V242.5" stroke="#e8115b" stroke-width="1" fill="none"/>
<rect x="777" y="239.5" width="212" height="3.5" fill="#fff"/>
<path d="M777 239.5 H989 M777 242.5 H989 M989 239.5 V243" stroke="#000" stroke-width="1" fill="none"/>
<path d="M785.0 241 h4 M802.6 241 h4 M820.2 241 h4 M837.8 241 h4 M855.4 241 h4 M873.0 241 h4 M890.6 241 h4 M908.2 241 h4 M925.8 241 h4 M943.4 241 h4 M961.0 241 h4 M978.6 241 h4 " stroke="#000" stroke-width="2.5"/>
<rect x="1020.5" y="239.5" width="5.5" height="99" fill="#000"/><rect x="1022" y="241" width="2.5" height="96" fill="#fff"/>
<rect x="712.5" y="396.5" width="35.5" height="95" fill="none" stroke="#0a2a0a" stroke-width="2.2"/><path d="M712.5 524.0 V621.0 M748 524.0 V621.0 M711.5 524.0 H720 M740 524.0 H749 M711.5 621.0 H720 M740 621.0 H749" stroke="#0a2a0a" stroke-width="2.2"/><rect x="720" y="521.5" width="20" height="99.0" fill="none" stroke="#0a2a0a" stroke-width="1.8"/><path d="M730.4 522.0 V620.0" stroke="#0a2a0a" stroke-width="1.3"/><path d="M720 525.0 H740 M720 528.6 H740 M720 532.2 H740 M720 535.8 H740 M720 539.4 H740 M720 543.0 H740 M720 546.6 H740 M720 550.2 H740 M720 553.8 H740 M720 557.4 H740 M720 561.0 H740 M720 581.0 H740 M720 584.6 H740 M720 588.2 H740 M720 591.8 H740 M720 595.4 H740 M720 599.0 H740 M720 602.6 H740 M720 606.2 H740 M720 609.8 H740 M720 613.4 H740 M720 617.0 H740 M720 620.6 H740 " stroke="#0a2a0a" stroke-width="1"/><path d="M722 550.0 L728 547.0 L727 549.0 L734 545.0 L733 547.0 L738 544.0" fill="none" stroke="#0a2a0a" stroke-width="0.9"/><path d="M712.5 654.5 V752.0 M748 654.5 V752.0 M711.5 654.5 H720 M740 654.5 H749 M711.5 752.0 H720 M740 752.0 H749" stroke="#0a2a0a" stroke-width="2.2"/><rect x="720" y="652.0" width="20" height="99.5" fill="none" stroke="#0a2a0a" stroke-width="1.8"/><path d="M730.4 652.5 V751.0" stroke="#0a2a0a" stroke-width="1.3"/><path d="M720 655.5 H740 M720 659.1 H740 M720 662.7 H740 M720 666.3 H740 M720 669.9 H740 M720 673.5 H740 M720 677.1 H740 M720 680.7 H740 M720 684.3 H740 M720 687.9 H740 M720 691.5 H740 M720 695.1 H740 M720 698.7 H740 M720 716.0 H740 M720 719.6 H740 M720 723.2 H740 M720 726.8 H740 M720 730.4 H740 M720 734.0 H740 M720 737.6 H740 M720 741.2 H740 M720 744.8 H740 M720 748.4 H740 M720 752.0 H740 " stroke="#0a2a0a" stroke-width="1"/><path d="M722 680.5 L728 677.5 L727 679.5 L734 675.5 L733 677.5 L738 674.5" fill="none" stroke="#0a2a0a" stroke-width="0.9"/><rect x="998" y="250.5" width="17" height="7" fill="none" stroke="#0a2a0a" stroke-width="1"/><path d="M991 258.0 H1020 M991 261.6 H1020 M991 265.2 H1020 M991 268.8 H1020 M991 272.4 H1020 M991 276.0 H1020 M991 279.6 H1020 M991 283.2 H1020 M991 286.8 H1020 M991 290.4 H1020 M991 294.0 H1020 " stroke="#0a2a0a" stroke-width="1"/><path d="M998 257 V296 M1015 257 V296" stroke="#0a2a0a" stroke-width="1"/><path d="M1005.7 258 V297" stroke="#0a2a0a" stroke-width="1.8"/><path d="M685 825.5 H713 M685 829.0 H713 M685 832.5 H713 M685 836.0 H713 M685 839.5 H713 M685 843.0 H713 M685 846.5 H713 M685 850.0 H713 M685 853.5 H713 M685 857.0 H713 M685 860.5 H713 M685 864.0 H713 " stroke="#0a2a0a" stroke-width="1"/><path d="M699 824 V866" stroke="#0a2a0a" stroke-width="2.2"/><path d="M691.5 866.5 V873.5 H706.5 V866.5" fill="none" stroke="#0a2a0a" stroke-width="1.3"/><path d="M688 848 L694 844 L693 847 L700 842" fill="none" stroke="#0a2a0a" stroke-width="0.9"/><path d="M1334 825.5 H1364 M1334 829.0 H1364 M1334 832.5 H1364 M1334 836.0 H1364 M1334 839.5 H1364 M1334 843.0 H1364 M1334 846.5 H1364 M1334 850.0 H1364 M1334 853.5 H1364 M1334 857.0 H1364 M1334 860.5 H1364 M1334 864.0 H1364 " stroke="#0a2a0a" stroke-width="1"/><path d="M1349 822 V866" stroke="#0a2a0a" stroke-width="2.2"/><path d="M1340.5 866.5 V873.5 H1357.5 V866.5" fill="none" stroke="#0a2a0a" stroke-width="1.3"/><path d="M1334 877.5 H1366" stroke="#0a2a0a" stroke-width="2"/><path d="M1337 850 L1343 846 L1342 849 L1349 844" fill="none" stroke="#0a2a0a" stroke-width="0.9"/>
<path d="M682.0 341.0 L673.0 341.0" stroke="#0a2a0a" stroke-width="1.8"/><path d="M673.0 341.0 A9.0 9.0 0 0 0 682.0 350.0" fill="none" stroke="#0a2a0a" stroke-width="0.9"/><path d="M683.0 394.0 L683.0 384.0" stroke="#0a2a0a" stroke-width="1.8"/><path d="M683.0 384.0 A10.0 10.0 0 0 1 693.0 394.0" fill="none" stroke="#0a2a0a" stroke-width="0.9"/><path d="M842.5 293.5 L842.5 283.5" stroke="#0a2a0a" stroke-width="1.8"/><path d="M842.5 283.5 A10.0 10.0 0 0 0 832.5 293.5" fill="none" stroke="#0a2a0a" stroke-width="0.9"/><path d="M902.5 339.0 L902.5 329.0" stroke="#0a2a0a" stroke-width="1.8"/><path d="M902.5 329.0 A10.0 10.0 0 0 0 892.5 339.0" fill="none" stroke="#0a2a0a" stroke-width="0.9"/><path d="M904.0 311.0 L904.0 301.0" stroke="#0a2a0a" stroke-width="1.8"/><path d="M904.0 301.0 A10.0 10.0 0 0 1 914.0 311.0" fill="none" stroke="#0a2a0a" stroke-width="0.9"/><path d="M938.0 311.0 L938.0 301.0" stroke="#0a2a0a" stroke-width="1.8"/><path d="M938.0 301.0 A10.0 10.0 0 0 1 948.0 311.0" fill="none" stroke="#0a2a0a" stroke-width="0.9"/><path d="M761.5 319.5 L761.5 309.5" stroke="#0a2a0a" stroke-width="1.8"/><path d="M761.5 309.5 A10.0 10.0 0 0 1 771.5 319.5" fill="none" stroke="#0a2a0a" stroke-width="0.9"/><path d="M842.0 319.5 L842.0 309.5" stroke="#0a2a0a" stroke-width="1.8"/><path d="M842.0 309.5 A10.0 10.0 0 0 0 832.0 319.5" fill="none" stroke="#0a2a0a" stroke-width="0.9"/><path d="M954.0 339.5 L954.0 330.5" stroke="#0a2a0a" stroke-width="1.8"/><path d="M954.0 330.5 A9.0 9.0 0 0 1 963.0 339.5" fill="none" stroke="#0a2a0a" stroke-width="0.9"/><path d="M1001.0 329.0 L1001.0 319.0" stroke="#0a2a0a" stroke-width="1.8"/><path d="M1001.0 319.0 A10.0 10.0 0 0 1 1011.0 329.0" fill="none" stroke="#0a2a0a" stroke-width="0.9"/><path d="M791.0 340.0 L791.0 348.0" stroke="#0a2a0a" stroke-width="1.8"/><path d="M791.0 348.0 A8.0 8.0 0 0 0 799.0 340.0" fill="none" stroke="#0a2a0a" stroke-width="0.9"/><path d="M821.0 340.0 L821.0 348.0" stroke="#0a2a0a" stroke-width="1.8"/><path d="M821.0 348.0 A8.0 8.0 0 0 1 813.0 340.0" fill="none" stroke="#0a2a0a" stroke-width="0.9"/><path d="M681.0 396.0 L672.0 396.0" stroke="#0a2a0a" stroke-width="1.8"/><path d="M672.0 396.0 A9.0 9.0 0 0 0 681.0 405.0" fill="none" stroke="#0a2a0a" stroke-width="0.9"/><path d="M681.0 490.0 L672.0 490.0" stroke="#0a2a0a" stroke-width="1.8"/><path d="M672.0 490.0 A9.0 9.0 0 0 0 681.0 499.0" fill="none" stroke="#0a2a0a" stroke-width="0.9"/><path d="M681.0 575.0 L672.0 575.0" stroke="#0a2a0a" stroke-width="1.8"/><path d="M672.0 575.0 A9.0 9.0 0 0 1 681.0 566.0" fill="none" stroke="#0a2a0a" stroke-width="0.9"/><path d="M681.0 577.0 L672.0 577.0" stroke="#0a2a0a" stroke-width="1.8"/><path d="M672.0 577.0 A9.0 9.0 0 0 0 681.0 586.0" fill="none" stroke="#0a2a0a" stroke-width="0.9"/><path d="M681.0 728.0 L672.0 728.0" stroke="#0a2a0a" stroke-width="1.8"/><path d="M672.0 728.0 A9.0 9.0 0 0 1 681.0 719.0" fill="none" stroke="#0a2a0a" stroke-width="0.9"/><path d="M681.0 729.0 L672.0 729.0" stroke="#0a2a0a" stroke-width="1.8"/><path d="M672.0 729.0 A9.0 9.0 0 0 0 681.0 738.0" fill="none" stroke="#0a2a0a" stroke-width="0.9"/><path d="M684.0 793.0 L684.0 783.0" stroke="#0a2a0a" stroke-width="1.8"/><path d="M684.0 783.0 A10.0 10.0 0 0 1 694.0 793.0" fill="none" stroke="#0a2a0a" stroke-width="0.9"/><path d="M749.0 782.0 L749.0 792.0" stroke="#0a2a0a" stroke-width="1.8"/><path d="M749.0 792.0 A10.0 10.0 0 0 1 739.0 782.0" fill="none" stroke="#0a2a0a" stroke-width="0.9"/><path d="M751.0 782.0 L751.0 791.0" stroke="#0a2a0a" stroke-width="1.8"/><path d="M751.0 791.0 A9.0 9.0 0 0 0 760.0 782.0" fill="none" stroke="#0a2a0a" stroke-width="0.9"/><path d="M787.0 810.0 L787.0 819.0" stroke="#0a2a0a" stroke-width="1.8"/><path d="M787.0 819.0 A9.0 9.0 0 0 0 796.0 810.0" fill="none" stroke="#0a2a0a" stroke-width="0.9"/><path d="M846.0 810.0 L846.0 819.0" stroke="#0a2a0a" stroke-width="1.8"/><path d="M846.0 819.0 A9.0 9.0 0 0 1 837.0 810.0" fill="none" stroke="#0a2a0a" stroke-width="0.9"/><path d="M856.3 782.0 L856.3 793.0" stroke="#0a2a0a" stroke-width="1.8"/><path d="M856.3 793.0 A11.0 11.0 0 0 0 867.3 782.0" fill="none" stroke="#0a2a0a" stroke-width="0.9"/><path d="M946.0 782.0 L946.0 793.0" stroke="#0a2a0a" stroke-width="1.8"/><path d="M946.0 793.0 A11.0 11.0 0 0 0 957.0 782.0" fill="none" stroke="#0a2a0a" stroke-width="0.9"/><path d="M1063.5 782.0 L1063.5 793.0" stroke="#0a2a0a" stroke-width="1.8"/><path d="M1063.5 793.0 A11.0 11.0 0 0 1 1052.5 782.0" fill="none" stroke="#0a2a0a" stroke-width="0.9"/><path d="M1066.5 782.0 L1066.5 793.0" stroke="#0a2a0a" stroke-width="1.8"/><path d="M1066.5 793.0 A11.0 11.0 0 0 0 1077.5 782.0" fill="none" stroke="#0a2a0a" stroke-width="0.9"/><path d="M1183.5 782.0 L1183.5 793.0" stroke="#0a2a0a" stroke-width="1.8"/><path d="M1183.5 793.0 A11.0 11.0 0 0 1 1172.5 782.0" fill="none" stroke="#0a2a0a" stroke-width="0.9"/><path d="M1232.0 782.0 L1232.0 793.0" stroke="#0a2a0a" stroke-width="1.8"/><path d="M1232.0 793.0 A11.0 11.0 0 0 1 1221.0 782.0" fill="none" stroke="#0a2a0a" stroke-width="0.9"/><path d="M1235.5 782.0 L1235.5 793.0" stroke="#0a2a0a" stroke-width="1.8"/><path d="M1235.5 793.0 A11.0 11.0 0 0 0 1246.5 782.0" fill="none" stroke="#0a2a0a" stroke-width="0.9"/><path d="M1281.0 782.0 L1281.0 793.0" stroke="#0a2a0a" stroke-width="1.8"/><path d="M1281.0 793.0 A11.0 11.0 0 0 1 1270.0 782.0" fill="none" stroke="#0a2a0a" stroke-width="0.9"/><path d="M1284.0 782.0 L1284.0 793.0" stroke="#0a2a0a" stroke-width="1.8"/><path d="M1284.0 793.0 A11.0 11.0 0 0 0 1295.0 782.0" fill="none" stroke="#0a2a0a" stroke-width="0.9"/><path d="M1333.5 805.0 L1344.5 805.0" stroke="#0a2a0a" stroke-width="1.8"/><path d="M1344.5 805.0 A11.0 11.0 0 0 0 1333.5 794.0" fill="none" stroke="#0a2a0a" stroke-width="0.9"/>
<rect x="775.5" y="393.5" width="16.5" height="3.5" fill="#fdf0f4" stroke="#e8115b" stroke-width="0.9"/><rect x="775.5" y="487.0" width="16.5" height="3.5" fill="#fdf0f4" stroke="#e8115b" stroke-width="0.9"/><rect x="775.5" y="611.0" width="16.5" height="3.5" fill="#fdf0f4" stroke="#e8115b" stroke-width="0.9"/><rect x="775.5" y="683.0" width="16.5" height="3.5" fill="#fdf0f4" stroke="#e8115b" stroke-width="0.9"/>
<path d="M786 397.0 H792" stroke="#111" stroke-width="1"/><path d="M786 490.5 H792" stroke="#111" stroke-width="1"/><path d="M786 614.5 H792" stroke="#111" stroke-width="1"/><path d="M786 686.5 H792" stroke="#111" stroke-width="1"/>
<path d="M790 613 V619 C797 627 801 636 801 645 C801 655 797 664 790 671 V684" fill="none" stroke="#0a2a0a" stroke-width="2.4"/>
<path d="M506 350.5 H578.5 V528.5 H506.5 V502 L507 496.5 C520 482 533 460 534.5 430 C534 400 520 372 506 356 Z" fill="none" stroke="#000" stroke-width="1.2"/>
<path d="M510 353 C526 372 538 400 538.5 430 C537 460 524 484 510 500" fill="none" stroke="#b8b8b8" stroke-width="0.8"/>
<path d="M476 328.5 C488 334 498 341 506 350" fill="none" stroke="#999" stroke-width="0.8" stroke-dasharray="6 3"/>
<path d="M582.5 337 V576" stroke="#000" stroke-width="1"/>
<g font-family="Liberation Sans, sans-serif"><text x="638" y="277.7" font-size="5.4" font-weight="bold" text-anchor="middle" fill="#111">Lounge</text><rect x="627.0" y="281.3" width="22" height="7" fill="none" stroke="#111" stroke-width="1"/><text x="638" y="287.0" font-size="4.6" text-anchor="middle" fill="#888">223</text><text x="638" y="294.8" font-size="5" text-anchor="middle" fill="#555">11593.01 CF</text><text x="757" y="276.7" font-size="5.4" font-weight="bold" text-anchor="middle" fill="#111">Cafeteria</text><rect x="746.0" y="280.3" width="22" height="7" fill="none" stroke="#111" stroke-width="1"/><text x="757" y="286.0" font-size="4.6" text-anchor="middle" fill="#888">224</text><text x="757" y="293.8" font-size="5" text-anchor="middle" fill="#555">3113.80 CF</text><text x="820" y="268.7" font-size="5.4" font-weight="bold" text-anchor="middle" fill="#111">Copy/Print</text><rect x="809.0" y="272.3" width="22" height="7" fill="none" stroke="#111" stroke-width="1"/><text x="820" y="278.0" font-size="4.6" text-anchor="middle" fill="#888">228</text><text x="820" y="285.8" font-size="5" text-anchor="middle" fill="#555">1427.61 CF</text><text x="871" y="278.7" font-size="5.4" font-weight="bold" text-anchor="middle" fill="#111">Administration</text><rect x="860.0" y="282.3" width="22" height="7" fill="none" stroke="#111" stroke-width="1"/><text x="871" y="288.0" font-size="4.6" text-anchor="middle" fill="#888">229</text><text x="871" y="295.8" font-size="5" text-anchor="middle" fill="#555">3382.82 CF</text><text x="923" y="278.7" font-size="5.4" font-weight="bold" text-anchor="middle" fill="#111">Office</text><rect x="912.0" y="282.3" width="22" height="7" fill="none" stroke="#111" stroke-width="1"/><text x="923" y="288.0" font-size="4.6" text-anchor="middle" fill="#888">230</text><text x="923" y="295.8" font-size="5" text-anchor="middle" fill="#555">1339.65 CF</text><text x="966" y="276.7" font-size="5.4" font-weight="bold" text-anchor="middle" fill="#111">Office</text><rect x="955.0" y="280.3" width="22" height="7" fill="none" stroke="#111" stroke-width="1"/><text x="966" y="286.0" font-size="4.6" text-anchor="middle" fill="#888">231</text><text x="966" y="293.8" font-size="5" text-anchor="middle" fill="#555">2099.65 CF</text><text x="1006" y="300.7" font-size="5.4" font-weight="bold" text-anchor="middle" fill="#111">Stair</text><rect x="995.0" y="304.3" width="22" height="7" fill="none" stroke="#111" stroke-width="1"/><text x="1006" y="310.0" font-size="4.6" text-anchor="middle" fill="#888">233</text><text x="1006" y="317.8" font-size="5" text-anchor="middle" fill="#555">2307.35 CF</text><text x="782" y="303.7" font-size="5.4" font-weight="bold" text-anchor="middle" fill="#111">Female</text><rect x="771.0" y="307.3" width="22" height="7" fill="none" stroke="#111" stroke-width="1"/><text x="782" y="313.0" font-size="4.6" text-anchor="middle" fill="#888">225</text><text x="782" y="320.8" font-size="5" text-anchor="middle" fill="#555">347.67 CF</text><text x="822" y="301.7" font-size="5.4" font-weight="bold" text-anchor="middle" fill="#111">Male</text><rect x="811.0" y="305.3" width="22" height="7" fill="none" stroke="#111" stroke-width="1"/><text x="822" y="311.0" font-size="4.6" text-anchor="middle" fill="#888">226</text><text x="822" y="318.8" font-size="5" text-anchor="middle" fill="#555">343.25 CF</text><text x="800" y="325.7" font-size="5.4" font-weight="bold" text-anchor="middle" fill="#111">Closet</text><rect x="789.0" y="329.3" width="22" height="7" fill="none" stroke="#111" stroke-width="1"/><text x="800" y="335.0" font-size="4.6" text-anchor="middle" fill="#888">227</text><text x="800" y="342.8" font-size="5" text-anchor="middle" fill="#555">341.20 CF</text><text x="932" y="322.7" font-size="5.4" font-weight="bold" text-anchor="middle" fill="#111">Corridor</text><rect x="921.0" y="326.3" width="22" height="7" fill="none" stroke="#111" stroke-width="1"/><text x="932" y="332.0" font-size="4.6" text-anchor="middle" fill="#888">234</text><text x="932" y="339.8" font-size="5" text-anchor="middle" fill="#555">1358.80 CF</text><text x="970" y="322.7" font-size="5.4" font-weight="bold" text-anchor="middle" fill="#111">Toilet</text><rect x="959.0" y="326.3" width="22" height="7" fill="none" stroke="#111" stroke-width="1"/><text x="970" y="332.0" font-size="4.6" text-anchor="middle" fill="#888">232</text><text x="970" y="339.8" font-size="5" text-anchor="middle" fill="#555">466.40 CF</text><text x="636" y="445.7" font-size="5.4" font-weight="bold" text-anchor="middle" fill="#111">Computer Lab</text><rect x="625.0" y="449.3" width="22" height="7" fill="none" stroke="#111" stroke-width="1"/><text x="636" y="455.0" font-size="4.6" text-anchor="middle" fill="#888">222</text><text x="636" y="462.8" font-size="5" text-anchor="middle" fill="#555">5332.97 CF</text><text x="629" y="510.7" font-size="5.4" font-weight="bold" text-anchor="middle" fill="#111">Instruction</text><rect x="618.0" y="514.3" width="22" height="7" fill="none" stroke="#111" stroke-width="1"/><text x="629" y="520.0" font-size="4.6" text-anchor="middle" fill="#888">221</text><text x="629" y="527.8" font-size="5" text-anchor="middle" fill="#555">3663.96 CF</text><text x="603" y="551.7" font-size="5.4" font-weight="bold" text-anchor="middle" fill="#111">Sprinkler Main</text><rect x="592.0" y="555.3" width="22" height="7" fill="none" stroke="#111" stroke-width="1"/><text x="603" y="561.0" font-size="4.6" text-anchor="middle" fill="#888">220A</text><text x="603" y="568.8" font-size="5" text-anchor="middle" fill="#555">544.27 CF</text><text x="636" y="551.7" font-size="5.4" font-weight="bold" text-anchor="middle" fill="#111">Electrical</text><rect x="625.0" y="555.3" width="22" height="7" fill="none" stroke="#111" stroke-width="1"/><text x="636" y="561.0" font-size="4.6" text-anchor="middle" fill="#888">220</text><text x="636" y="568.8" font-size="5" text-anchor="middle" fill="#555">1781.49 CF</text><text x="733" y="498.7" font-size="5.4" font-weight="bold" text-anchor="middle" fill="#111">Corridor</text><rect x="722.0" y="502.3" width="22" height="7" fill="none" stroke="#111" stroke-width="1"/><text x="733" y="508.0" font-size="4.6" text-anchor="middle" fill="#888">216A</text><text x="733" y="515.8" font-size="5" text-anchor="middle" fill="#555">13053.04 CF</text><text x="733" y="634.7" font-size="5.4" font-weight="bold" text-anchor="middle" fill="#111">Space</text><rect x="722.0" y="638.3" width="22" height="7" fill="none" stroke="#111" stroke-width="1"/><text x="733" y="644.0" font-size="4.6" text-anchor="middle" fill="#888">216B</text><text x="733" y="651.8" font-size="5" text-anchor="middle" fill="#555">22510.96 CF</text><text x="632" y="654.7" font-size="5.4" font-weight="bold" text-anchor="middle" fill="#111">Library</text><rect x="621.0" y="658.3" width="22" height="7" fill="none" stroke="#111" stroke-width="1"/><text x="632" y="664.0" font-size="4.6" text-anchor="middle" fill="#888">219</text><text x="632" y="671.8" font-size="5" text-anchor="middle" fill="#555">6695.81 CF</text><text x="815" y="652.7" font-size="5.4" font-weight="bold" text-anchor="middle" fill="#111">Lounge</text><rect x="804.0" y="656.3" width="22" height="7" fill="none" stroke="#111" stroke-width="1"/><text x="815" y="662.0" font-size="4.6" text-anchor="middle" fill="#888">215</text><text x="815" y="669.8" font-size="5" text-anchor="middle" fill="#555">4465.87 CF</text><text x="635" y="799.7" font-size="5.4" font-weight="bold" text-anchor="middle" fill="#111">Instruction</text><rect x="624.0" y="803.3" width="22" height="7" fill="none" stroke="#111" stroke-width="1"/><text x="635" y="809.0" font-size="4.6" text-anchor="middle" fill="#888">218</text><text x="635" y="816.8" font-size="5" text-anchor="middle" fill="#555">6675.98 CF</text><text x="697" y="799.7" font-size="5.4" font-weight="bold" text-anchor="middle" fill="#111">Stair</text><rect x="686.0" y="803.3" width="22" height="7" fill="none" stroke="#111" stroke-width="1"/><text x="697" y="809.0" font-size="4.6" text-anchor="middle" fill="#888">217</text><text x="697" y="816.8" font-size="5" text-anchor="middle" fill="#555">2283.46 CF</text><text x="746" y="828.7" font-size="5.4" font-weight="bold" text-anchor="middle" fill="#111">Lounge</text><rect x="735.0" y="832.3" width="22" height="7" fill="none" stroke="#111" stroke-width="1"/><text x="746" y="838.0" font-size="4.6" text-anchor="middle" fill="#888">212</text><text x="746" y="845.8" font-size="5" text-anchor="middle" fill="#555">3120.12 CF</text><text x="770" y="785.7" font-size="5.4" font-weight="bold" text-anchor="middle" fill="#111">Electrical</text><rect x="759.0" y="789.3" width="22" height="7" fill="none" stroke="#111" stroke-width="1"/><text x="770" y="795.0" font-size="4.6" text-anchor="middle" fill="#888">214</text><text x="770" y="802.8" font-size="5" text-anchor="middle" fill="#555">463.16 CF</text><text x="819" y="793.7" font-size="5.4" font-weight="bold" text-anchor="middle" fill="#111">Utility</text><rect x="808.0" y="797.3" width="22" height="7" fill="none" stroke="#111" stroke-width="1"/><text x="819" y="803.0" font-size="4.6" text-anchor="middle" fill="#888">213</text><text x="819" y="810.8" font-size="5" text-anchor="middle" fill="#555">528.07 CF</text><text x="800" y="833.7" font-size="5.4" font-weight="bold" text-anchor="middle" fill="#111">Female</text><rect x="789.0" y="837.3" width="22" height="7" fill="none" stroke="#111" stroke-width="1"/><text x="800" y="843.0" font-size="4.6" text-anchor="middle" fill="#888">211</text><text x="800" y="850.8" font-size="5" text-anchor="middle" fill="#555">1201.33 CF</text><text x="830" y="835.7" font-size="5.4" font-weight="bold" text-anchor="middle" fill="#111">Male</text><rect x="819.0" y="839.3" width="22" height="7" fill="none" stroke="#111" stroke-width="1"/><text x="830" y="845.0" font-size="4.6" text-anchor="middle" fill="#888">210</text><text x="830" y="852.8" font-size="5" text-anchor="middle" fill="#555">1201.33 CF</text><text x="906" y="808.7" font-size="5.4" font-weight="bold" text-anchor="middle" fill="#111">Computer Lab</text><rect x="895.0" y="812.3" width="22" height="7" fill="none" stroke="#111" stroke-width="1"/><text x="906" y="818.0" font-size="4.6" text-anchor="middle" fill="#888">209</text><text x="906" y="825.8" font-size="5" text-anchor="middle" fill="#555">5752.49 CF</text><text x="986" y="822.7" font-size="5.4" font-weight="bold" text-anchor="middle" fill="#111">Drafting</text><rect x="975.0" y="826.3" width="22" height="7" fill="none" stroke="#111" stroke-width="1"/><text x="986" y="832.0" font-size="4.6" text-anchor="middle" fill="#888">208</text><text x="986" y="839.8" font-size="5" text-anchor="middle" fill="#555">4246.96 CF</text><text x="1047" y="822.7" font-size="5.4" font-weight="bold" text-anchor="middle" fill="#111">Copy/Print</text><rect x="1036.0" y="826.3" width="22" height="7" fill="none" stroke="#111" stroke-width="1"/><text x="1047" y="832.0" font-size="4.6" text-anchor="middle" fill="#888">207</text><text x="1047" y="839.8" font-size="5" text-anchor="middle" fill="#555">2611.96 CF</text><text x="1100" y="822.7" font-size="5.4" font-weight="bold" text-anchor="middle" fill="#111">Lounge</text><rect x="1089.0" y="826.3" width="22" height="7" fill="none" stroke="#111" stroke-width="1"/><text x="1100" y="832.0" font-size="4.6" text-anchor="middle" fill="#888">206</text><text x="1100" y="839.8" font-size="5" text-anchor="middle" fill="#555">2799.39 CF</text><text x="1165" y="822.7" font-size="5.4" font-weight="bold" text-anchor="middle" fill="#111">Instruction</text><rect x="1154.0" y="826.3" width="22" height="7" fill="none" stroke="#111" stroke-width="1"/><text x="1165" y="832.0" font-size="4.6" text-anchor="middle" fill="#888">205</text><text x="1165" y="839.8" font-size="5" text-anchor="middle" fill="#555">4246.96 CF</text><text x="1215" y="822.7" font-size="5.4" font-weight="bold" text-anchor="middle" fill="#111">Instruction</text><rect x="1204.0" y="826.3" width="22" height="7" fill="none" stroke="#111" stroke-width="1"/><text x="1215" y="832.0" font-size="4.6" text-anchor="middle" fill="#888">204</text><text x="1215" y="839.8" font-size="5" text-anchor="middle" fill="#555">2611.96 CF</text><text x="1255" y="822.7" font-size="5.4" font-weight="bold" text-anchor="middle" fill="#111">Computer Lab</text><rect x="1244.0" y="826.3" width="22" height="7" fill="none" stroke="#111" stroke-width="1"/><text x="1255" y="832.0" font-size="4.6" text-anchor="middle" fill="#888">203</text><text x="1255" y="839.8" font-size="5" text-anchor="middle" fill="#555">2799.39 CF</text><text x="1301" y="822.7" font-size="5.4" font-weight="bold" text-anchor="middle" fill="#111">Instruction</text><rect x="1290.0" y="826.3" width="22" height="7" fill="none" stroke="#111" stroke-width="1"/><text x="1301" y="832.0" font-size="4.6" text-anchor="middle" fill="#888">202</text><text x="1301" y="839.8" font-size="5" text-anchor="middle" fill="#555">2674.12 CF</text><text x="1350" y="806.7" font-size="5.4" font-weight="bold" text-anchor="middle" fill="#111">Stair</text><rect x="1339.0" y="810.3" width="22" height="7" fill="none" stroke="#111" stroke-width="1"/><text x="1350" y="816.0" font-size="4.6" text-anchor="middle" fill="#888">201</text><text x="1350" y="823.8" font-size="5" text-anchor="middle" fill="#555">2650.74 CF</text><text x="902" y="758.7" font-size="5.4" font-weight="bold" text-anchor="middle" fill="#111">Corridor</text><rect x="891.0" y="762.3" width="22" height="7" fill="none" stroke="#111" stroke-width="1"/><text x="902" y="768.0" font-size="4.6" text-anchor="middle" fill="#888">208A</text><text x="902" y="775.8" font-size="5" text-anchor="middle" fill="#555">6665.86 CF</text><text x="1140" y="758.7" font-size="5.4" font-weight="bold" text-anchor="middle" fill="#111">Corridor</text><rect x="1129.0" y="762.3" width="22" height="7" fill="none" stroke="#111" stroke-width="1"/><text x="1140" y="768.0" font-size="4.6" text-anchor="middle" fill="#888">208B</text><text x="1140" y="775.8" font-size="5" text-anchor="middle" fill="#555">4680.17 CF</text><text x="1265" y="758.7" font-size="5.4" font-weight="bold" text-anchor="middle" fill="#111">Corridor</text><rect x="1254.0" y="762.3" width="22" height="7" fill="none" stroke="#111" stroke-width="1"/><text x="1265" y="768.0" font-size="4.6" text-anchor="middle" fill="#888">208C</text><text x="1265" y="775.8" font-size="5" text-anchor="middle" fill="#555">5112.54 CF</text></g>
<path d="M545 249.0 H530" stroke="#b0b0b0"/><circle cx="537.0" cy="249.0" r="7.5" fill="#fff" stroke="#b0b0b0" stroke-width="1"/><text x="537.0" y="252.0" font-size="8.0" text-anchor="middle" fill="#b0b0b0">A</text><path d="M545 336.0 H530" stroke="#b0b0b0"/><circle cx="537.0" cy="336.0" r="7.5" fill="#fff" stroke="#b0b0b0" stroke-width="1"/><text x="537.0" y="339.0" font-size="8.0" text-anchor="middle" fill="#b0b0b0">B</text><path d="M545 374.0 H530" stroke="#b0b0b0"/><circle cx="537.0" cy="374.0" r="7.5" fill="#fff" stroke="#b0b0b0" stroke-width="1"/><text x="537.0" y="377.0" font-size="8.0" text-anchor="middle" fill="#b0b0b0">C</text><path d="M545 449.0 H530" stroke="#b0b0b0"/><circle cx="537.0" cy="449.0" r="7.5" fill="#fff" stroke="#b0b0b0" stroke-width="1"/><text x="537.0" y="452.0" font-size="8.0" text-anchor="middle" fill="#b0b0b0">D</text><path d="M545 524.0 H530" stroke="#b0b0b0"/><circle cx="537.0" cy="524.0" r="7.5" fill="#fff" stroke="#b0b0b0" stroke-width="1"/><text x="537.0" y="527.0" font-size="8.0" text-anchor="middle" fill="#b0b0b0">E</text><path d="M545 598.0 H530" stroke="#b0b0b0"/><circle cx="537.0" cy="598.0" r="7.5" fill="#fff" stroke="#b0b0b0" stroke-width="1"/><text x="537.0" y="601.0" font-size="8.0" text-anchor="middle" fill="#b0b0b0">F</text><path d="M545 621.0 H530" stroke="#b0b0b0"/><circle cx="537.0" cy="621.0" r="7.5" fill="#fff" stroke="#b0b0b0" stroke-width="1"/><text x="537.0" y="624.0" font-size="6.5" text-anchor="middle" fill="#b0b0b0">F.1</text><path d="M545 673.0 H530" stroke="#b0b0b0"/><circle cx="537.0" cy="673.0" r="7.5" fill="#fff" stroke="#b0b0b0" stroke-width="1"/><text x="537.0" y="676.0" font-size="8.0" text-anchor="middle" fill="#b0b0b0">G</text><path d="M545 747.5 H530" stroke="#b0b0b0"/><circle cx="537.0" cy="747.5" r="7.5" fill="#fff" stroke="#b0b0b0" stroke-width="1"/><text x="537.0" y="750.5" font-size="8.0" text-anchor="middle" fill="#b0b0b0">H</text><path d="M545 786.0 H530" stroke="#b0b0b0"/><circle cx="537.0" cy="786.0" r="7.5" fill="#fff" stroke="#b0b0b0" stroke-width="1"/><text x="537.0" y="789.0" font-size="8.0" text-anchor="middle" fill="#b0b0b0">I</text><path d="M545 873.0 H530" stroke="#b0b0b0"/><circle cx="537.0" cy="873.0" r="7.5" fill="#fff" stroke="#b0b0b0" stroke-width="1"/><text x="537.0" y="876.0" font-size="8.0" text-anchor="middle" fill="#b0b0b0">J</text><circle cx="484.0" cy="501.0" r="7.5" fill="#fff" stroke="#b0b0b0" stroke-width="1"/><text x="484.0" y="504.0" font-size="6.5" text-anchor="middle" fill="#b0b0b0">D.1</text><circle cx="495.0" cy="516.0" r="7.5" fill="#fff" stroke="#b0b0b0" stroke-width="1"/><text x="495.0" y="519.0" font-size="6.5" text-anchor="middle" fill="#b0b0b0">.25</text><circle cx="511.0" cy="303.0" r="7.5" fill="#fff" stroke="#b0b0b0" stroke-width="1"/><text x="511.0" y="306.0" font-size="8.0" text-anchor="middle" fill="#b0b0b0">.5</text><circle cx="576.5" cy="303.0" r="7.5" fill="#fff" stroke="#b0b0b0" stroke-width="1"/><text x="576.5" y="306.0" font-size="6.5" text-anchor="middle" fill="#b0b0b0">.75</text><circle cx="590.0" cy="921.0" r="7.5" fill="#fff" stroke="#b0b0b0" stroke-width="1"/><text x="590.0" y="924.0" font-size="8.0" text-anchor="middle" fill="#b0b0b0">1</text><circle cx="676.5" cy="921.0" r="7.5" fill="#fff" stroke="#b0b0b0" stroke-width="1"/><text x="676.5" y="924.0" font-size="6.5" text-anchor="middle" fill="#b0b0b0">1.1</text><circle cx="708.0" cy="921.0" r="7.5" fill="#fff" stroke="#b0b0b0" stroke-width="1"/><text x="708.0" y="924.0" font-size="8.0" text-anchor="middle" fill="#b0b0b0">2</text><circle cx="777.5" cy="921.0" r="7.5" fill="#fff" stroke="#b0b0b0" stroke-width="1"/><text x="777.5" y="924.0" font-size="8.0" text-anchor="middle" fill="#b0b0b0">3</text><circle cx="852.5" cy="921.0" r="7.5" fill="#fff" stroke="#b0b0b0" stroke-width="1"/><text x="852.5" y="924.0" font-size="8.0" text-anchor="middle" fill="#b0b0b0">4</text><circle cx="929.5" cy="921.0" r="7.5" fill="#fff" stroke="#b0b0b0" stroke-width="1"/><text x="929.5" y="924.0" font-size="8.0" text-anchor="middle" fill="#b0b0b0">5</text><circle cx="1006.0" cy="921.0" r="7.5" fill="#fff" stroke="#b0b0b0" stroke-width="1"/><text x="1006.0" y="924.0" font-size="8.0" text-anchor="middle" fill="#b0b0b0">6</text><circle cx="1083.5" cy="921.0" r="7.5" fill="#fff" stroke="#b0b0b0" stroke-width="1"/><text x="1083.5" y="924.0" font-size="8.0" text-anchor="middle" fill="#b0b0b0">7</text><circle cx="1160.5" cy="921.0" r="7.5" fill="#fff" stroke="#b0b0b0" stroke-width="1"/><text x="1160.5" y="924.0" font-size="8.0" text-anchor="middle" fill="#b0b0b0">8</text><circle cx="1237.5" cy="921.0" r="7.5" fill="#fff" stroke="#b0b0b0" stroke-width="1"/><text x="1237.5" y="924.0" font-size="8.0" text-anchor="middle" fill="#b0b0b0">9</text><circle cx="1366.0" cy="714.0" r="7.5" fill="#fff" stroke="#b0b0b0" stroke-width="1"/><text x="1366.0" y="717.0" font-size="8.0" text-anchor="middle" fill="#b0b0b0">10</text>
<path d="M548 323 H1050 M548 648 H693 M768 645 H879 M829 587 V708 M537 761.5 H1430 M548 816.5 H1386" stroke="#000" stroke-width="1.3" fill="none"/><path d="M1050 311 V325 M692 636 V649 M768 644 V657 M1429 750.5 V763 M1385 806 V818" stroke="#000" stroke-width="3"/><path d="M829 707.5 H841" stroke="#000" stroke-width="3"/><g transform="rotate(0 540.0 323.0)"><path d="M532.0 323.0 A8 8 0 0 0 548.0 323.0 Z" fill="#fff" stroke="#1747c4" stroke-width="1.4"/><path d="M529.5 323.0 L540.0 313.0 L550.5 323.0 Z" fill="#fff" stroke="#1747c4" stroke-width="1.8" stroke-linejoin="miter"/><path d="M538.5 326.5 h3" stroke="#1747c4" stroke-width="1"/><path d="M539.3 319.5 h1.5" stroke="#1747c4" stroke-width="1"/></g><g transform="rotate(0 540.0 648.0)"><path d="M532.0 648.0 A8 8 0 0 0 548.0 648.0 Z" fill="#fff" stroke="#1747c4" stroke-width="1.4"/><path d="M529.5 648.0 L540.0 638.0 L550.5 648.0 Z" fill="#fff" stroke="#1747c4" stroke-width="1.8" stroke-linejoin="miter"/><path d="M538.5 651.5 h3" stroke="#1747c4" stroke-width="1"/><path d="M539.3 644.5 h1.5" stroke="#1747c4" stroke-width="1"/></g><g transform="rotate(180 887.0 645.0)"><path d="M879.0 645.0 A8 8 0 0 0 895.0 645.0 Z" fill="#fff" stroke="#1747c4" stroke-width="1.4"/><path d="M876.5 645.0 L887.0 635.0 L897.5 645.0 Z" fill="#fff" stroke="#1747c4" stroke-width="1.8" stroke-linejoin="miter"/><path d="M885.5 648.5 h3" stroke="#1747c4" stroke-width="1"/><path d="M886.3 641.5 h1.5" stroke="#1747c4" stroke-width="1"/></g><g transform="rotate(90 829.0 579.0)"><path d="M821.0 579.0 A8 8 0 0 0 837.0 579.0 Z" fill="#fff" stroke="#1747c4" stroke-width="1.4"/><path d="M818.5 579.0 L829.0 569.0 L839.5 579.0 Z" fill="#fff" stroke="#1747c4" stroke-width="1.8" stroke-linejoin="miter"/><path d="M827.5 582.5 h3" stroke="#1747c4" stroke-width="1"/><path d="M828.3 575.5 h1.5" stroke="#1747c4" stroke-width="1"/></g><g transform="rotate(0 529.0 761.5)"><path d="M521.0 761.5 A8 8 0 0 0 537.0 761.5 Z" fill="#fff" stroke="#1747c4" stroke-width="1.4"/><path d="M518.5 761.5 L529.0 751.5 L539.5 761.5 Z" fill="#fff" stroke="#1747c4" stroke-width="1.8" stroke-linejoin="miter"/><path d="M527.5 765.0 h3" stroke="#1747c4" stroke-width="1"/><path d="M528.3 758.0 h1.5" stroke="#1747c4" stroke-width="1"/></g><g transform="rotate(0 540.0 816.5)"><path d="M532.0 816.5 A8 8 0 0 0 548.0 816.5 Z" fill="#fff" stroke="#1747c4" stroke-width="1.4"/><path d="M529.5 816.5 L540.0 806.5 L550.5 816.5 Z" fill="#fff" stroke="#1747c4" stroke-width="1.8" stroke-linejoin="miter"/><path d="M538.5 820.0 h3" stroke="#1747c4" stroke-width="1"/><path d="M539.3 813.0 h1.5" stroke="#1747c4" stroke-width="1"/></g>
<rect x="412.5" y="730.5" width="14" height="14" fill="#fff" stroke="#111" stroke-width="1.4"/><path d="M426.5 730.5 L434.5 737.5 L426.5 744.5" fill="none" stroke="#111" stroke-width="0.9"/><circle cx="419.5" cy="737.5" r="0.6" fill="#555"/>
<rect x="1653.5" y="729.5" width="14.5" height="15" fill="#fff" stroke="#111" stroke-width="1.4"/><path d="M1653.5 730 L1646.5 737.5 L1653.5 744.5" fill="none" stroke="#111" stroke-width="0.9"/><circle cx="1660.5" cy="737.5" r="0.6" fill="#555"/>
<path d="M629 494 V506 M623 500 H635" stroke="#1747c4" stroke-width="1.5"/>
<path d="M636 452 L629 500 L636 572" fill="none" stroke="#111" stroke-width="0.9"/>
</svg>
<svg class="a" style="left:1700px;top:180px" width="50" height="40"><rect x="8" y="11.5" width="35.5" height="18" rx="9" fill="#a3a3a3"/><circle cx="17" cy="20.5" r="6" fill="#fff"/></svg>
<div class="t" style="left:1747px;top:186px;font-size:11.9px;color:#555">Accelerated Graphics</div>
<div class="t" style="left:1747px;top:199px;font-size:11.5px;font-style:italic;color:#555">Tech Preview</div>
<svg class="a" style="left:1864px;top:166px" width="40" height="125"><rect x="2" y="3.5" width="33.5" height="115.5" rx="5" fill="#f3f3f3" stroke="#a9a9a9" stroke-width="1.4"/><circle cx="27" cy="9" r="3.5" fill="#eee" stroke="#999"/><path d="M25 7 L29 11 M29 7 L25 11" stroke="#999" stroke-width="0.8"/><path d="M15 24.5 H22 a3 3 0 0 1 3 3 V35 a8 8 0 0 1 -8 8 a8 8 0 0 1 -8 -8 V30.5 a6 6 0 0 1 6 -6 Z" fill="#eee" stroke="#999"/><circle cx="17" cy="33" r="4.5" fill="#f6f6f6" stroke="#999"/><path d="M14 37 L11 40" stroke="#999"/><text x="17.5" y="48" font-size="10" font-weight="bold" fill="#5b8fc9" font-family="Liberation Sans">2D</text><path d="M15 54 h5 l-2.5 2.5 z" fill="#888"/><line x1="6" y1="61" x2="31" y2="61" stroke="#bbb"/><rect x="10.5" y="69.5" width="10" height="10" fill="#a9d69a" stroke="#7fbf6a"/><circle cx="21" cy="80" r="3.5" fill="none" stroke="#777"/><path d="M23.5 82.5 L26 85" stroke="#777" stroke-width="1.2"/><path d="M15 96 h5 l-2.5 2.5 z" fill="#888"/><circle cx="27" cy="112" r="3.5" fill="#eee" stroke="#999"/><line x1="24" y1="112" x2="30" y2="112" stroke="#999"/></svg>
<div class="a" style="left:276px;top:962px;width:373px;height:17px;background:#f0f0f0"></div>
<div class="t" style="left:287px;top:964px;font-size:11.5px">1/8" = 1'-0"</div>
<svg class="a" style="left:355px;top:962px" width="300" height="17">
<rect x="4.5" y="3.5" width="15" height="10" fill="#fff" stroke="#444"/>
<rect x="5.0" y="4.0" width="2" height="2.3" fill="#888"/>
<rect x="5.0" y="8.6" width="2" height="2.3" fill="#888"/>
<rect x="7.1" y="6.3" width="2" height="2.3" fill="#888"/>
<rect x="7.1" y="10.9" width="2" height="2.3" fill="#888"/>
<rect x="9.2" y="4.0" width="2" height="2.3" fill="#888"/>
<rect x="9.2" y="8.6" width="2" height="2.3" fill="#888"/>
<rect x="11.3" y="6.3" width="2" height="2.3" fill="#888"/>
<rect x="11.3" y="10.9" width="2" height="2.3" fill="#888"/>
<rect x="13.4" y="4.0" width="2" height="2.3" fill="#888"/>
<rect x="13.4" y="8.6" width="2" height="2.3" fill="#888"/>
<rect x="15.5" y="6.3" width="2" height="2.3" fill="#888"/>
<rect x="15.5" y="10.9" width="2" height="2.3" fill="#888"/>
<rect x="17.6" y="4.0" width="2" height="2.3" fill="#888"/>
<rect x="17.6" y="8.6" width="2" height="2.3" fill="#888"/>
<path d="M31.5 6.5 H40.5 V15.5 H31.5 Z M31.5 6.5 L34.5 3.5 H43.5 V12.5 L40.5 15.5 M40.5 6.5 L43.5 3.5" fill="none" stroke="#444"/>
<circle cx="62" cy="7" r="3.5" fill="#f39c12"/><path d="M62 1 V2.5 M56 7 H57.5 M58 3 L59 4 M66 3 L65 4 M58 11 L59 10" stroke="#f39c12" stroke-width="1"/><circle cx="67" cy="10" r="3" fill="#5ac8d8"/><rect x="66" y="13" width="2" height="2" fill="#666"/>
<circle cx="87" cy="7" r="4.5" fill="#f0f0f0" stroke="#777"/><ellipse cx="89" cy="14" rx="5" ry="1.5" fill="#bbb"/><circle cx="93" cy="10" r="3" fill="#5ac8d8"/>
<path d="M112.5 16 V8.5 H123" fill="none" stroke="#555" stroke-width="1.6"/><path d="M119 2 V5 M106 13.5 H109" stroke="#2a8ad6" stroke-width="1.6"/><path d="M119 6 V13 M110 13.5 H117" stroke="#2a8ad6" stroke-width="0.8" stroke-dasharray="1 1.5"/><path d="M119.5 11.5 L124.5 16.5 M124.5 11.5 L119.5 16.5" stroke="#e02020" stroke-width="1.5"/>
<path d="M138.5 16 V8.5 H149" fill="none" stroke="#555" stroke-width="1.6"/><path d="M145 2 V5 M132 13.5 H135" stroke="#2a8ad6" stroke-width="1.6"/><path d="M145 6 V10 M136 13.5 H141" stroke="#2a8ad6" stroke-width="0.8" stroke-dasharray="1 1.5"/><circle cx="147" cy="12" r="3.3" fill="#5ac8d8"/><rect x="146" y="15.5" width="2" height="2" fill="#666"/>
<circle cx="163" cy="10" r="3" fill="none" stroke="#999" stroke-width="1.2"/><circle cx="170" cy="10" r="3" fill="none" stroke="#999" stroke-width="1.2"/><path d="M160 8 L163 4 M173 8 L170 4" stroke="#999"/>
<circle cx="194" cy="8" r="3.8" fill="#5ac8d8"/><rect x="192.5" y="12" width="3" height="2.5" fill="#777"/>
<path d="M214 5 H224 V11 M214 5 V13 H219" fill="none" stroke="#555"/><rect x="219.5" y="10.5" width="5" height="5" fill="none" stroke="#555" stroke-dasharray="1 1"/>
<path d="M239 15 V7 L243 3 H252 V11 M239 7 H248 V15 M243 3 V11 M239 11 H252" fill="none" stroke="#555" stroke-width="0.8"/><path d="M240 11 V16 M243 11 V16 M239 13 H246" stroke="#d22" stroke-width="0.9"/><circle cx="251" cy="12" r="3" fill="#f9b93a"/>
<path d="M264.5 2.5 V15 M278.5 2.5 V7 M264.5 4.5 H278.5" fill="none" stroke="#444" stroke-width="1"/><path d="M266 13.5 H268 M269.5 13.5 H271.5 M273 13.5 H274" stroke="#444" stroke-width="1"/><circle cx="277" cy="12" r="3.3" fill="#5ac8d8"/><rect x="276" y="15.5" width="2" height="2" fill="#666"/>
</svg>
<div class="a" style="left:640px;top:962px;width:1261px;height:17px;background:#e6e6e6"></div>
<div class="a" style="left:640px;top:962px;width:1px;height:17px;background:#d0d0d0"></div>
<svg class="a" style="left:640px;top:962px" width="1278" height="17"><path d="M11 4 L7 8.5 L11 13" fill="none" stroke="#999" stroke-width="1.4"/><line x1="18.5" y1="0" x2="18.5" y2="17" stroke="#d6d6d6"/><rect x="621" y="4" width="19" height="8" rx="4" fill="#8c8c8c"/><line x1="1244.5" y1="0" x2="1244.5" y2="17" stroke="#d6d6d6"/><path d="M1251 4 L1255 8.5 L1251 13" fill="none" stroke="#999" stroke-width="1.4"/></svg>
<div class="a" style="left:1901px;top:962px;width:17px;height:17px;background:#ececec"></div>
<svg class="a" style="left:1901px;top:962px" width="17" height="17"><rect x="7" y="12" width="2" height="2" fill="#999"/><rect x="12" y="12" width="2" height="2" fill="#999"/><rect x="12" y="7" width="2" height="2" fill="#999"/></svg>
<div class="a" style="left:1901px;top:166px;width:17px;height:796px;background:#e6e6e6"></div>
<svg class="a" style="left:1901px;top:166px" width="17" height="796"><path d="M4 13 L8.5 9 L13 13" fill="none" stroke="#999" stroke-width="1.4"/><line x1="0" y1="17.5" x2="17" y2="17.5" stroke="#d6d6d6"/><rect x="4" y="389" width="8" height="20" rx="4" fill="#8c8c8c"/><line x1="0" y1="779.5" x2="17" y2="779.5" stroke="#d6d6d6"/><path d="M4 787 L8.5 791 L13 787" fill="none" stroke="#999" stroke-width="1.4"/></svg>
<div class="a" style="left:0;top:146px;width:272px;height:835px;background:#f5f5f5"></div>
<div class="a" style="left:272px;top:146px;width:2px;height:835px;background:#c8c8c8"></div>
<div class="a" style="left:0;top:146px;width:272px;height:17px;background:#d9d9d9"></div>
<div class="t" style="left:1px;top:148px;font-size:11.8px;color:#3a3a3a">Properties</div>
<svg class="a" style="left:258px;top:149px" width="11" height="11"><path d="M1 1 L10 10 M10 1 L1 10" stroke="#555" stroke-width="1.4"/></svg>
<div class="a" style="left:2px;top:163px;width:267px;height:71px;border:1px solid #c9c9c9;background:#f5f5f5"></div>
<div class="a" style="left:2px;top:165px;width:66px;height:66px;border:1px solid #b9b9b9;background:#f5f5f5"></div>
<svg class="a" style="left:0;top:160px" width="70" height="75"><path d="M20.5 23.5 H38.5 V25.5 H47.5 V34.5 H49.5 V52.5 H31.5 V50.5 H20.5 Z" fill="#f2f2f2" stroke="#555" stroke-width="1.1"/><path d="M38.5 26 V34.5 M31.5 34.5 V50 M31.5 34.5 H47.5" stroke="#777" stroke-width="0.9" stroke-dasharray="2 1.5" fill="none"/></svg>
<div class="t" style="left:72px;top:192px;font-size:12px">Floor Plan</div>
<svg class="a" style="left:252px;top:195px" width="10" height="6"><path d="M0.5 0.5 H8.5 L4.5 4.5 Z" fill="#666"/></svg>
<div class="t" style="left:3px;top:241px;font-size:11.8px">Floor Plan: Level 2 - Zoning</div>
<svg class="a" style="left:176px;top:244px" width="9" height="7"><path d="M1 1.5 L4.5 5 L8 1.5" fill="none" stroke="#888" stroke-width="1.8"/></svg>
<div class="a" style="left:0;top:259px;width:189px;height:2px;background:#c8c8c8"></div>
<svg class="a" style="left:190px;top:236px" width="24" height="24"><path d="M5 4.5 H11.5 V11.5 H4.5 V5 Z M4.5 12.5 H11.5 V19 H4.5 Z M12.5 4.5 H19 V10.5 H12.5 Z" fill="#dde3ea" stroke="#333" stroke-width="1.1" stroke-linejoin="round"/><rect x="12.5" y="10.5" width="7.3" height="9.3" rx="1" fill="#fff" stroke="#333" stroke-width="1.1"/><rect x="14" y="12" width="4.5" height="1.5" fill="#2a6fc8"/><path d="M14 16 H18 M16.5 14.8 L18 16 L16.5 17.2" fill="none" stroke="#444" stroke-width="0.8"/></svg>
<div class="t" style="left:215px;top:241px;font-size:11.8px">Edit Type</div>
<div class="a" style="left:0;top:266px;width:252px;height:17px;background:#e6e6e6"></div>
<div class="t" style="left:1px;top:267px;font-weight:bold;font-size:11.8px">Graphics</div>
<svg class="a" style="left:238px;top:268px" width="10" height="12"><path d="M1.5 5 L4.5 2 L7.5 5 M1.5 9.5 L4.5 6.5 L7.5 9.5" fill="none" stroke="#222" stroke-width="1.3"/></svg>
<div class="a" style="left:0;top:283px;width:252px;height:255px;background:#fff"></div>
<div class="a" style="left:0;top:301px;width:252px;height:1px;background:#e8e8e8"></div>
<div class="t" style="left:7px;top:285px;color:#1e1e1e;font-size:11.6px">View Scale</div>
<div class="a" style="left:120px;top:284px;width:120px;height:17px;border:1px solid #111;background:#fff"></div>
<div class="t" style="left:125px;top:285px">1/8" = 1'-0"</div>
<div class="a" style="left:0;top:319px;width:252px;height:1px;background:#e8e8e8"></div>
<div class="t" style="left:7px;top:303px;color:#8a8a8a;font-size:11.6px">Scale&nbsp;Value&nbsp;&nbsp;&nbsp;&nbsp;1:</div>
<div class="t" style="left:122px;top:303px;color:#8a8a8a;font-size:11.6px">96</div>
<div class="a" style="left:0;top:337px;width:252px;height:1px;background:#e8e8e8"></div>
<div class="t" style="left:7px;top:321px;color:#1e1e1e;font-size:11.6px">Display Model</div>
<div class="t" style="left:122px;top:321px;color:#1e1e1e;font-size:11.6px">Normal</div>
<div class="a" style="left:0;top:355px;width:252px;height:1px;background:#e8e8e8"></div>
<div class="t" style="left:7px;top:339px;color:#1e1e1e;font-size:11.6px">Detail Level</div>
<div class="t" style="left:122px;top:339px;color:#1e1e1e;font-size:11.6px">Fine</div>
<div class="a" style="left:0;top:373px;width:252px;height:1px;background:#e8e8e8"></div>
<div class="t" style="left:7px;top:357px;color:#1e1e1e;font-size:11.6px">Parts Visibility</div>
<div class="t" style="left:122px;top:357px;color:#1e1e1e;font-size:11.6px">Show Original</div>
<div class="a" style="left:0;top:391px;width:252px;height:1px;background:#e8e8e8"></div>
<div class="t" style="left:7px;top:375px;color:#1e1e1e;font-size:11.6px">Visibility/Graphics ...</div>
<div class="a" style="left:121px;top:375px;width:118px;height:14px;border:1px solid #b4b4b4;background:#f0f0f0"></div>
<div class="t" style="left:121px;width:118px;text-align:center;top:375px">Edit...</div>
<div class="a" style="left:0;top:409px;width:252px;height:1px;background:#e8e8e8"></div>
<div class="t" style="left:7px;top:393px;color:#1e1e1e;font-size:11.6px">Graphic Display Op...</div>
<div class="a" style="left:121px;top:393px;width:118px;height:14px;border:1px solid #b4b4b4;background:#f0f0f0"></div>
<div class="t" style="left:121px;width:118px;text-align:center;top:393px">Edit...</div>
<div class="a" style="left:0;top:427px;width:252px;height:1px;background:#e8e8e8"></div>
<div class="t" style="left:7px;top:411px;color:#1e1e1e;font-size:11.6px">Orientation</div>
<div class="t" style="left:122px;top:411px;color:#1e1e1e;font-size:11.6px">Project North</div>
<div class="a" style="left:0;top:445px;width:252px;height:1px;background:#e8e8e8"></div>
<div class="t" style="left:7px;top:429px;color:#8a8a8a;font-size:11.6px">Wall Join Display</div>
<div class="t" style="left:122px;top:429px;color:#8a8a8a;font-size:11.6px">Clean all wall joins</div>
<div class="a" style="left:0;top:463px;width:252px;height:1px;background:#e8e8e8"></div>
<div class="t" style="left:7px;top:447px;color:#1e1e1e;font-size:11.6px">Discipline</div>
<div class="t" style="left:122px;top:447px;color:#1e1e1e;font-size:11.6px">Coordination</div>
<div class="a" style="left:0;top:481px;width:252px;height:1px;background:#e8e8e8"></div>
<div class="t" style="left:7px;top:465px;color:#1e1e1e;font-size:11.6px">Show Hidden Lines</div>
<div class="t" style="left:122px;top:465px;color:#1e1e1e;font-size:11.6px">By Discipline</div>
<div class="a" style="left:0;top:499px;width:252px;height:1px;background:#e8e8e8"></div>
<div class="t" style="left:7px;top:483px;color:#1e1e1e;font-size:11.6px">Color Scheme Loca...</div>
<div class="t" style="left:122px;top:483px;color:#1e1e1e;font-size:11.6px">Background</div>
<div class="a" style="left:0;top:517px;width:252px;height:1px;background:#e8e8e8"></div>
<div class="t" style="left:7px;top:501px;color:#1e1e1e;font-size:11.6px">Color Scheme</div>
<div class="a" style="left:121px;top:501px;width:118px;height:14px;border:1px solid #b4b4b4;background:#f0f0f0"></div>
<div class="t" style="left:121px;width:118px;text-align:center;top:501px">&lt;none&gt;</div>
<div class="a" style="left:0;top:535px;width:252px;height:1px;background:#e8e8e8"></div>
<div class="t" style="left:7px;top:519px;color:#1e1e1e;font-size:11.6px">System Color Sche...</div>
<div class="a" style="left:121px;top:519px;width:118px;height:14px;border:1px solid #b4b4b4;background:#f0f0f0"></div>
<div class="t" style="left:121px;width:118px;text-align:center;top:519px">Edit...</div>
<div class="a" style="left:119px;top:283px;width:1px;height:255px;background:#e8e8e8"></div>
<div class="a" style="left:240px;top:283px;width:1px;height:255px;background:#e8e8e8"></div>
<div class="a" style="left:252px;top:266px;width:18px;height:272px;background:#e8e8e8"></div>
<svg class="a" style="left:252px;top:266px" width="18" height="272"><path d="M5 10 L9 6 L13 10" fill="none" stroke="#999" stroke-width="1.2"/><rect x="5.5" y="17" width="8" height="74" rx="4" fill="#8c8c8c"/><line x1="0" y1="253.5" x2="18" y2="253.5" stroke="#d6d6d6"/><path d="M5 263 L9 267 L13 263" fill="none" stroke="#999" stroke-width="1.2"/></svg>
<div class="a" style="left:252px;top:282px;width:18px;height:1px;background:#d6d6d6"></div>
<div class="a" style="left:0;top:538px;width:272px;height:26px;background:#f0f0f0"></div>
<div class="a" style="left:1px;top:540px;width:20px;height:20px;background:#9fd0f0"></div>
<svg class="a" style="left:0;top:538px" width="80" height="24"><path d="M5 7 H13 M5 11 H11 M5 15 H11 M5 19 H13" stroke="#333" stroke-width="1.3"/><path d="M16 6 V20 M14 8 L16 5.5 L18 8 M14 18 L16 20.5 L18 18" fill="none" stroke="#333" stroke-width="1.1"/><text x="28" y="13" font-size="8" fill="#2a6fb8">A</text><text x="28" y="21" font-size="8" fill="#2a6fb8">Z</text><path d="M38 6 V20 M36 17.5 L38 20 L40 17.5" fill="none" stroke="#333" stroke-width="1.1"/><text x="53" y="13" font-size="8" fill="#2a6fb8">Z</text><text x="53" y="21" font-size="8" fill="#2a6fb8">A</text><path d="M63 6 V20 M61 17.5 L63 20 L65 17.5" fill="none" stroke="#333" stroke-width="1.1"/></svg>
<div class="a" style="left:197px;top:540px;width:70px;height:18px;border:1px solid #d4d4d4;border-radius:3px;background:#efefef"></div>
<div class="t" style="left:198px;width:68px;text-align:center;top:543px;color:#a8a8a8">Apply</div>
<div class="a" style="left:0;top:563px;width:272px;height:2px;background:#c8c8c8"></div>
<div class="a" style="left:0;top:565px;width:272px;height:17px;background:#d9d9d9"></div>
<div class="t" style="left:1px;top:567px;font-size:11.3px;color:#3a3a3a">Project Browser - RME_Mech_Zones_03_i</div>
<svg class="a" style="left:258px;top:568px" width="11" height="11"><path d="M1 1 L10 10 M10 1 L1 10" stroke="#555" stroke-width="1.4"/></svg>
<div class="a" style="left:0;top:582px;width:270px;height:24px;background:#cccccc"></div>
<div class="a" style="left:0;top:582px;width:23px;height:24px;background:#f7f7f7;border-top-right-radius:3px"></div>
<svg class="a" style="left:0;top:582px" width="200" height="24"><path d="M4.5 12 L11.5 5 L16 9.5 V6.5 H17 V10.5 L18.5 12 M6.5 10.5 V18.5 H11 M9.5 18.5 V14" fill="none" stroke="#555" stroke-width="1.1"/><rect x="12" y="13.5" width="6" height="4" fill="#f5f5f5" stroke="#555" stroke-width="0.9"/><rect x="15" y="17" width="4" height="2.5" fill="#3a8ad6"/><rect x="10" y="14" width="1" height="3" fill="#f0c030"/><path d="M27 8 V4.5 H30.5 M38.5 4.5 H42 V8 M42 15.5 V19 H38.5 M30.5 19 H27 V15.5" fill="none" stroke="#555" stroke-width="1.1"/><path d="M30.5 16 V10 L32.5 7.5 H39 V13.5 L37 16 Z" fill="#d9d9d9" stroke="#555" stroke-width="0.9"/><rect x="51.5" y="4.5" width="15" height="15" fill="#f3f3f3" stroke="#555"/><rect x="51.5" y="4.5" width="15" height="2" fill="#555"/><rect x="53.5" y="9.5" width="3" height="3" fill="none" stroke="#555" stroke-width="0.9"/><circle cx="55" cy="16" r="1.6" fill="none" stroke="#555" stroke-width="0.9"/><path d="M58 10 H65 M58 12.5 H65 M58 15 H65 M58 17.5 H65" stroke="#555" stroke-width="0.9" stroke-dasharray="2 1"/><rect x="75.5" y="6.5" width="14" height="11" fill="#f3f3f3" stroke="#555"/><rect x="75.5" y="6.5" width="14" height="2" fill="#555"/><path d="M75.5 11.5 H89.5 M75.5 14.5 H89.5 M79 8.5 V17.5" stroke="#555" stroke-width="1"/><path d="M99.5 19 V8 H104 L107 5.5 L113 11 a3 3 0 0 1 -1 6 L110 19 Z" fill="#f3f3f3" stroke="#555" stroke-width="1"/><circle cx="111" cy="15" r="2" fill="none" stroke="#555" stroke-width="0.8"/><path d="M124.5 5.5 H138 V19 H124.5 V14 H130 V5.5" fill="#f3f3f3" stroke="#555" stroke-width="1.1"/><rect x="124.5" y="5.5" width="5.5" height="8.5" fill="#f3f3f3" stroke="#555" stroke-width="1.1"/><path d="M149 4.5 H147.5 V19.5 H149 M160.5 4.5 H162 V19.5 H160.5" fill="none" stroke="#333" stroke-width="1.1"/><circle cx="152.5" cy="9.5" r="3" fill="#f3f3f3" stroke="#555" stroke-width="0.9"/><rect x="152.5" y="11" width="6" height="6" fill="#f3f3f3" stroke="#555" stroke-width="0.9"/><path d="M172 16 L176 12 M174.5 17.5 a2.8 2.8 0 0 1 -4 -4 l3 -3 M178 9 a2.8 2.8 0 0 1 4 4 l-3 3" fill="none" stroke="#e8883a" stroke-width="1.4"/><path d="M178.5 8 a2.8 2.8 0 0 1 4 4 l-3 3 a2.8 2.8 0 0 1 -4 -4 Z" fill="none" stroke="#e8883a" stroke-width="1.3"/></svg>
<div class="a" style="left:0;top:606px;width:272px;height:42px;background:#fff"></div>
<div class="a" style="left:7px;top:614px;width:255px;height:25px;border:1px solid #dcdcdc;background:#fff"></div>
<svg class="a" style="left:14px;top:618px" width="18" height="18"><circle cx="7" cy="7" r="5" fill="none" stroke="#444" stroke-width="1.5"/><path d="M10.5 10.5 L15 15" stroke="#444" stroke-width="1.8"/></svg>
<div class="t" style="left:40px;top:620px;color:#9a9a9a;font-size:12px">Search</div>
<div class="a" style="left:0;top:648px;width:252px;height:331px;background:#fff"></div>
<div class="a" style="left:0;top:648px;width:252px;height:19px;background:#f0f0f0;border-top:1px solid #e2e2e2;border-bottom:1px solid #e2e2e2"></div>
<svg class="a" style="left:0;top:648px" width="252" height="331">
<path d="M4 9.5 H12" stroke="#555" stroke-width="1.7"/>
<path d="M21.5 5 V1.5 H25 M32 1.5 H35.5 V5 M35.5 13 V16.5 H32 M25 16.5 H21.5 V13" fill="none" stroke="#444" stroke-width="1.1"/><path d="M25 13.5 V7 L27 4.5 H32.5 V11 L30.5 13.5 Z" fill="#d6d6d6" stroke="#555" stroke-width="0.9"/><path d="M25 7 H30.5 V13.5 M30.5 7 L32.5 4.5" fill="none" stroke="#777" stroke-width="0.7"/>
<path d="M20 29.5 H28" stroke="#555" stroke-width="1.7"/>
<path d="M36 49.5 H44" stroke="#555" stroke-width="1.7"/>
<path d="M52 69.5 H60" stroke="#555" stroke-width="1.7"/>
<path d="M56.0 65 V74" stroke="#555" stroke-width="1.7"/>
<path d="M52 89.5 H60" stroke="#555" stroke-width="1.7"/>
<rect x="86.5" y="102.5" width="13" height="13" fill="none" stroke="#555" stroke-dasharray="2 1"/><rect x="88.5" y="104.5" width="9" height="9" fill="none" stroke="#555"/>
<rect x="86.5" y="122.5" width="13" height="13" fill="none" stroke="#555" stroke-dasharray="2 1"/><rect x="88.5" y="124.5" width="9" height="9" fill="none" stroke="#555"/>
<rect x="86.5" y="142.5" width="13" height="13" fill="none" stroke="#555" stroke-dasharray="2 1"/><rect x="88.5" y="144.5" width="9" height="9" fill="none" stroke="#555"/>
<path d="M52 169.5 H60" stroke="#555" stroke-width="1.7"/>
<path d="M56.0 165 V174" stroke="#555" stroke-width="1.7"/>
<path d="M52 189.5 H60" stroke="#555" stroke-width="1.7"/>
<path d="M56.0 185 V194" stroke="#555" stroke-width="1.7"/>
<path d="M36 209.5 H44" stroke="#555" stroke-width="1.7"/>
<path d="M40.0 205 V214" stroke="#555" stroke-width="1.7"/>
<path d="M36 229.5 H44" stroke="#555" stroke-width="1.7"/>
<path d="M40.0 225 V234" stroke="#555" stroke-width="1.7"/>
<path d="M36 249.5 H44" stroke="#555" stroke-width="1.7"/>
<path d="M40.0 245 V254" stroke="#555" stroke-width="1.7"/>
<path d="M36 269.5 H44" stroke="#555" stroke-width="1.7"/>
<path d="M52 289.5 H60" stroke="#555" stroke-width="1.7"/>
<path d="M56.0 285 V294" stroke="#555" stroke-width="1.7"/>
<path d="M52 309.5 H60" stroke="#555" stroke-width="1.7"/>
<rect x="86.5" y="322.5" width="13" height="13" fill="none" stroke="#555" stroke-dasharray="2 1"/><rect x="88.5" y="324.5" width="9" height="9" fill="none" stroke="#555"/>
<path d="M7.5 19.0 L7.5 331.0" stroke="#a8a8a8" stroke-width="1" stroke-dasharray="2.5 2.5"/>
<path d="M7.5 29.5 L17.5 29.5" stroke="#a8a8a8" stroke-width="1" stroke-dasharray="2.5 2.5"/>
<path d="M23.5 39.0 L23.5 331.0" stroke="#a8a8a8" stroke-width="1" stroke-dasharray="2.5 2.5"/>
<path d="M23.5 49.5 L33.5 49.5" stroke="#a8a8a8" stroke-width="1" stroke-dasharray="2.5 2.5"/>
<path d="M23.5 209.5 L33.5 209.5" stroke="#a8a8a8" stroke-width="1" stroke-dasharray="2.5 2.5"/>
<path d="M23.5 229.5 L33.5 229.5" stroke="#a8a8a8" stroke-width="1" stroke-dasharray="2.5 2.5"/>
<path d="M23.5 249.5 L33.5 249.5" stroke="#a8a8a8" stroke-width="1" stroke-dasharray="2.5 2.5"/>
<path d="M23.5 269.5 L33.5 269.5" stroke="#a8a8a8" stroke-width="1" stroke-dasharray="2.5 2.5"/>
<path d="M39.5 59.0 L39.5 189.5" stroke="#a8a8a8" stroke-width="1" stroke-dasharray="2.5 2.5"/>
<path d="M39.5 69.5 L49.5 69.5" stroke="#a8a8a8" stroke-width="1" stroke-dasharray="2.5 2.5"/>
<path d="M39.5 89.5 L49.5 89.5" stroke="#a8a8a8" stroke-width="1" stroke-dasharray="2.5 2.5"/>
<path d="M39.5 169.5 L49.5 169.5" stroke="#a8a8a8" stroke-width="1" stroke-dasharray="2.5 2.5"/>
<path d="M39.5 189.5 L49.5 189.5" stroke="#a8a8a8" stroke-width="1" stroke-dasharray="2.5 2.5"/>
<path d="M55.5 99.0 L55.5 149.5" stroke="#a8a8a8" stroke-width="1" stroke-dasharray="2.5 2.5"/>
<path d="M55.5 109.5 L84.0 109.5" stroke="#a8a8a8" stroke-width="1" stroke-dasharray="2.5 2.5"/>
<path d="M55.5 129.5 L84.0 129.5" stroke="#a8a8a8" stroke-width="1" stroke-dasharray="2.5 2.5"/>
<path d="M55.5 149.5 L84.0 149.5" stroke="#a8a8a8" stroke-width="1" stroke-dasharray="2.5 2.5"/>
<path d="M39.5 279.0 L39.5 331.0" stroke="#a8a8a8" stroke-width="1" stroke-dasharray="2.5 2.5"/>
<path d="M39.5 289.5 L49.5 289.5" stroke="#a8a8a8" stroke-width="1" stroke-dasharray="2.5 2.5"/>
<path d="M39.5 309.5 L49.5 309.5" stroke="#a8a8a8" stroke-width="1" stroke-dasharray="2.5 2.5"/>
<path d="M55.5 319.0 L55.5 331.0" stroke="#a8a8a8" stroke-width="1" stroke-dasharray="2.5 2.5"/>
<path d="M55.5 329.5 L84.0 329.5" stroke="#a8a8a8" stroke-width="1" stroke-dasharray="2.5 2.5"/>
</svg>
<div class="t" style="left:41px;top:651px;font-size:11.8px">Views (Discipline)</div>
<div class="t" style="left:37px;top:671px;font-size:11.8px">Design</div>
<div class="t" style="left:53px;top:691px;font-size:11.8px">Architectural</div>
<div class="t" style="left:69px;top:711px;font-size:11.8px">Floor Plans</div>
<div class="t" style="left:69px;top:731px;font-size:11.8px">Ceiling Plans</div>
<div class="t" style="left:105px;top:751px;font-size:11.8px">Level 1</div>
<div class="t" style="left:105px;top:771px;font-size:11.8px">Level 2</div>
<div class="t" style="left:105px;top:791px;font-size:11.8px">Level 3</div>
<div class="t" style="left:69px;top:811px;font-size:11.8px">3D Views</div>
<div class="t" style="left:69px;top:831px;font-size:11.8px">Elevations (Building Elevation)</div>
<div class="t" style="left:53px;top:851px;font-size:11.8px">FP - Design</div>
<div class="t" style="left:53px;top:871px;font-size:11.8px">HVAC - Design</div>
<div class="t" style="left:53px;top:891px;font-size:11.8px">Lighting - Design</div>
<div class="t" style="left:53px;top:911px;font-size:11.8px">MEP - Design</div>
<div class="t" style="left:69px;top:931px;font-size:11.8px">3D Views</div>
<div class="t" style="left:69px;top:951px;font-size:11.8px">Elevations (Building Elevation)</div>
<div class="t" style="left:105px;top:971px;font-size:11.8px">East - MEP</div>
<div class="a" style="left:252px;top:648px;width:18px;height:331px;background:#e8e8e8"></div>
<svg class="a" style="left:252px;top:648px" width="18" height="331"><path d="M5 12 L9 8 L13 12" fill="none" stroke="#999" stroke-width="1.2"/><line x1="0" y1="19.5" x2="18" y2="19.5" stroke="#d6d6d6"/><rect x="5.5" y="23" width="8" height="75" rx="4" fill="#8c8c8c"/><line x1="0" y1="313.5" x2="18" y2="313.5" stroke="#d6d6d6"/><path d="M5 320 L9 324 L13 320" fill="none" stroke="#999" stroke-width="1.2"/></svg>
<div class="a" style="left:0;top:979px;width:1918px;height:2px;background:#ffffff"></div>
<div class="a" style="left:0;top:981px;width:1918px;height:24px;background:#f5f5f5"></div>
<div class="a" style="left:0;top:1005px;width:1918px;height:1px;background:#c8c8c8"></div>
<div class="t" style="left:1px;top:987px;font-size:11.3px">Click to select, TAB for alternates, CTRL adds, SHIFT unselects.</div>
<svg class="a" style="left:0;top:980px" width="1918" height="26">
<path d="M893 8 L899 6 V19 L893 21 Z" fill="#3b8fd6"/><path d="M897 5 L903 3 V16 L897 18 Z" fill="#e8883a"/><path d="M900 9 L906 7 V20 L900 22 Z" fill="#4cb567"/><path d="M904 18 L909 13" stroke="#3b8fd6" stroke-width="1.4"/>
<path d="M1112.5 13 L1115.5 16 L1118.5 13" fill="none" stroke="#bbb" stroke-width="1.3"/>
<circle cx="1136" cy="13" r="2.5" fill="none" stroke="#aaa" stroke-width="1.1"/><path d="M1132 20 V18 a4 3 0 0 1 8 0 V20 Z" fill="none" stroke="#aaa" stroke-width="1.1"/><path d="M1139 5.5 H1146 V10 H1142 L1140 12 V10 H1139 Z" fill="none" stroke="#aaa" stroke-width="1"/>
<text x="1147" y="19" font-size="12" fill="#a8a8a8" font-family="Liberation Sans">:0</text>
<rect x="1183.5" y="5.5" width="15" height="15" fill="#fff" stroke="#444" stroke-width="1.1"/><rect x="1183.5" y="5.5" width="15" height="2" fill="#444"/><path d="M1186 10.5 h1.5 M1186 13.5 h1.5 M1186 16.5 h1.5 M1189 10.5 H1196 M1189 13.5 H1196 M1189 16.5 H1196" stroke="#444" stroke-width="1.2"/>
<rect x="1209.5" y="5.5" width="15" height="13" fill="none" stroke="#999" stroke-width="1"/><rect x="1209.5" y="5.5" width="15" height="1.5" fill="#999"/><path d="M1212 10.5 h1.5 M1212 13.5 h1.5 M1215 10.5 H1222 M1215 13.5 H1222 M1215 16.5 H1222" stroke="#999" stroke-width="1.1"/><path d="M1206 19 H1214 M1211 16.5 L1214 19 L1211 21.5" fill="none" stroke="#aaa" stroke-width="1.4"/>
<path d="M1428.5 13 L1431.5 16 L1434.5 13" fill="none" stroke="#bbb" stroke-width="1.3"/>
<rect x="1665" y="6.5" width="14" height="4.5" rx="2.2" fill="none" stroke="#e8883a" stroke-width="1.3"/>
<path d="M1672.0 10.0 V20.0 L1674.5 18.0 L1676.5 21.5 L1678.0 20.8 L1676.0 17.3 L1679.0 17.0 Z" fill="#fff" stroke="#222" stroke-width="0.9"/>
<path d="M1692 11 L1697 5 H1702 L1697 11 Z M1692 15.5 L1697 12.5 H1701 L1697 15.5 Z" fill="#3b8fd6"/><path d="M1701 5 L1706 10 M1706 5 L1701 10" stroke="#e02020" stroke-width="1.6"/>
<path d="M1698.0 10.0 V20.0 L1700.5 18.0 L1702.5 21.5 L1704.0 20.8 L1702.0 17.3 L1705.0 17.0 Z" fill="#fff" stroke="#222" stroke-width="0.9"/>
<path d="M1719 5.5 H1726 V9 H1724 V14 H1721 L1718 17" fill="none" stroke="#777" stroke-width="1"/>
<path d="M1724.0 10.0 V20.0 L1726.5 18.0 L1728.5 21.5 L1730.0 20.8 L1728.0 17.3 L1731.0 17.0 Z" fill="#fff" stroke="#222" stroke-width="0.9"/>
<path d="M1744 10 L1750 6 V20 L1744 22 Z" fill="#6ab0e6" stroke="#3b8fd6" stroke-width="0.8"/><path d="M1752 4.5 L1757 9.5 M1757 4.5 L1752 9.5" stroke="#e02020" stroke-width="1.6"/>
<path d="M1750.0 10.0 V20.0 L1752.5 18.0 L1754.5 21.5 L1756.0 20.8 L1754.0 17.3 L1757.0 17.0 Z" fill="#fff" stroke="#222" stroke-width="0.9"/>
<path d="M1770 12 H1777 M1775 5 V19 M1773 7 L1775 4.5 L1777 7 M1772 10 L1769.5 12 L1772 14" fill="none" stroke="#222" stroke-width="1.1"/>
<path d="M1776.0 10.0 V20.0 L1778.5 18.0 L1780.5 21.5 L1782.0 20.8 L1780.0 17.3 L1783.0 17.0 Z" fill="#fff" stroke="#222" stroke-width="0.9"/>
<circle cx="1808.7" cy="12.5" r="1.4" fill="#c4c4c4"/>
<circle cx="1806.9" cy="16.9" r="1.4" fill="#c4c4c4"/>
<circle cx="1802.5" cy="18.7" r="1.4" fill="#c4c4c4"/>
<circle cx="1798.1" cy="16.9" r="1.4" fill="#c4c4c4"/>
<circle cx="1796.3" cy="12.5" r="1.4" fill="#c4c4c4"/>
<circle cx="1798.1" cy="8.1" r="1.4" fill="#c4c4c4"/>
<circle cx="1802.5" cy="6.3" r="1.4" fill="#c4c4c4"/>
<circle cx="1806.9" cy="8.1" r="1.4" fill="#c4c4c4"/>
<path d="M1819.5 6.5 H1835 L1829.5 13 V20.5 L1825.5 19 V13 Z" fill="#c8c8c8" stroke="#444" stroke-width="1"/>
<text x="1836" y="19" font-size="12" fill="#e8883a" font-family="Liberation Sans">:</text><text x="1839" y="19" font-size="12" fill="#2a6fb8" font-family="Liberation Sans">0</text>
</svg>
<div class="t" style="left:1236px;top:989px;font-size:11.5px;color:#b0b0b0">Main Model</div>
</body></html>
